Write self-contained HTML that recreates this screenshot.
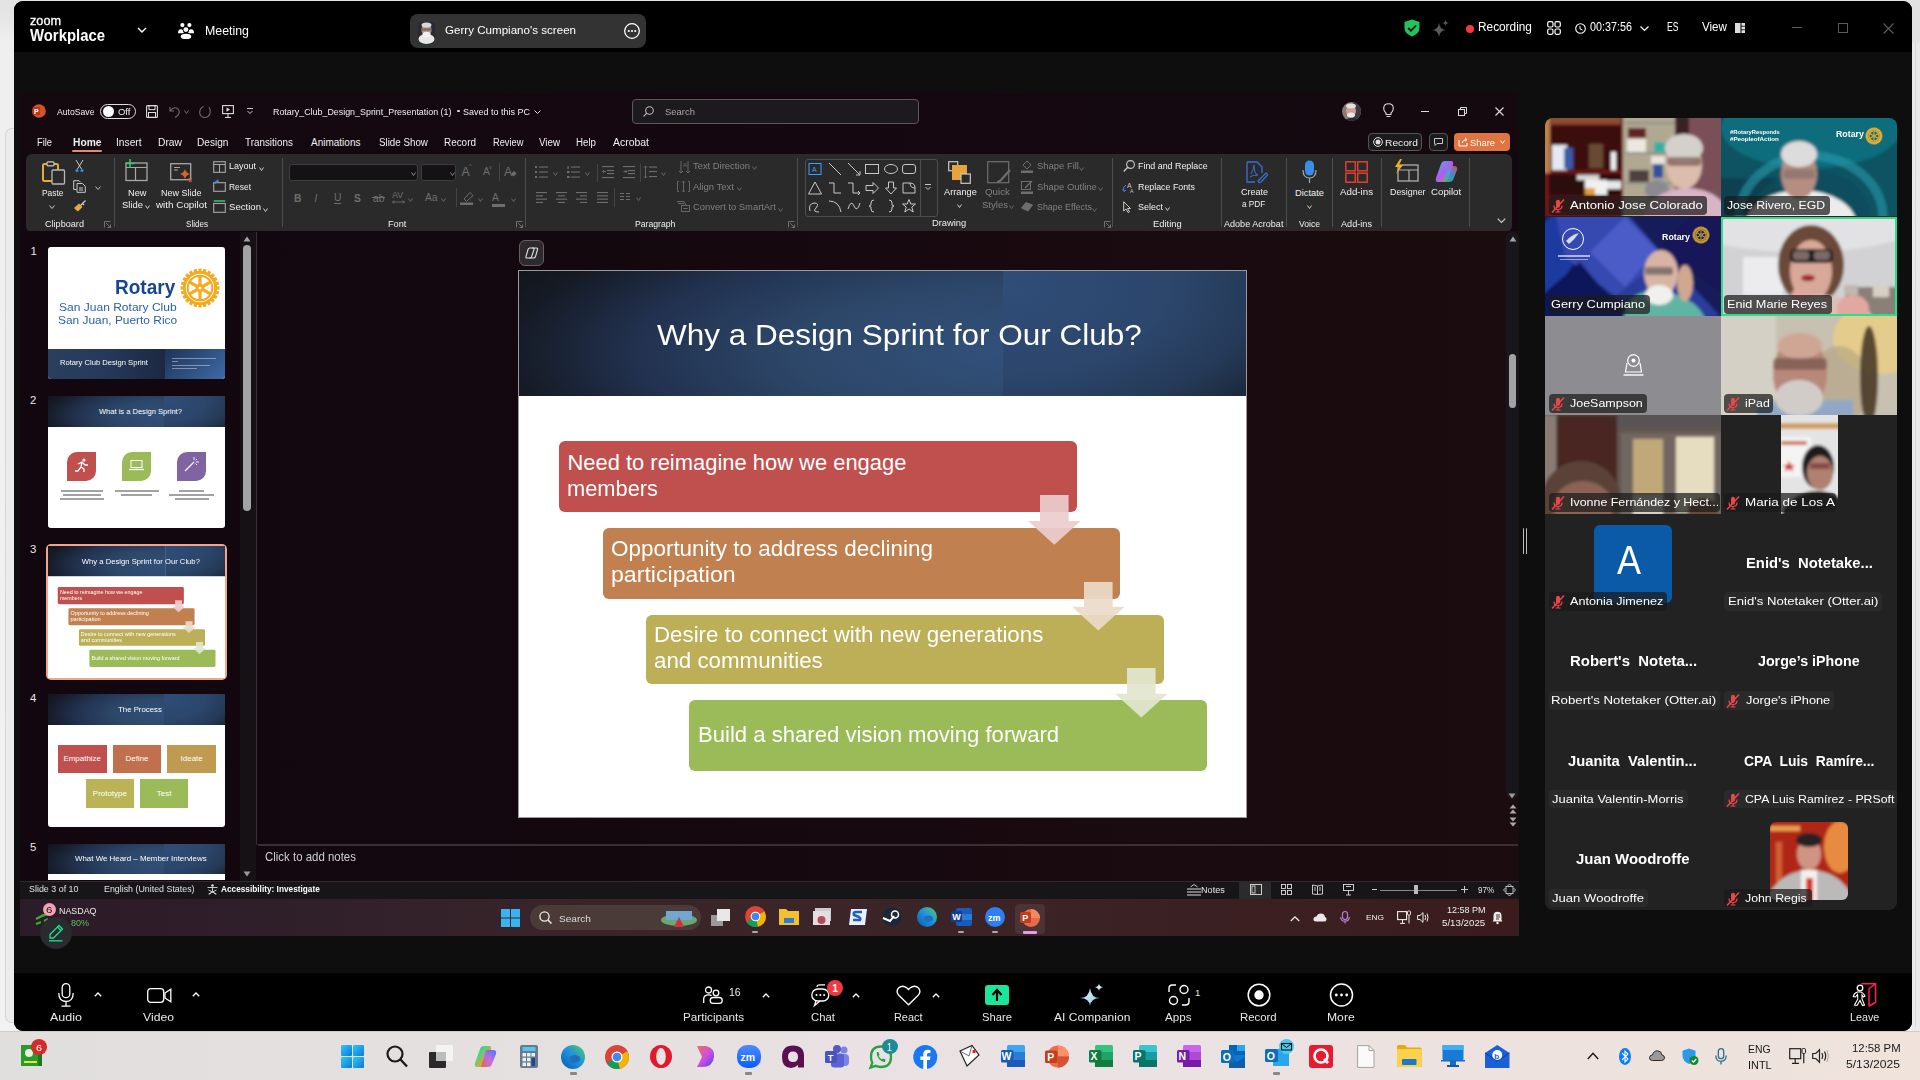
<!DOCTYPE html><html><head><meta charset="utf-8"><style>
html,body{margin:0;padding:0;width:1920px;height:1080px;overflow:hidden;background:#ededed;}
*{box-sizing:border-box;}
.a{position:absolute;}
.t{white-space:pre;line-height:1;font-family:"Liberation Sans",sans-serif;transform-origin:0 0;}
svg{overflow:visible;}
</style></head><body>
<div class="a" style="left:0px;top:0px;width:1920px;height:1080px;background:linear-gradient(180deg,#e4e4e4 0,#e4e4e4 12px,#efefef 42px,#f2f2f2 100%);"></div>
<div class="a" style="left:5px;top:128px;width:12px;height:895px;border-left:1px solid #d6d6d6;border-top:1px solid #d6d6d6;border-bottom:1px solid #d6d6d6;border-radius:7px 0 0 7px;background:#ececec;"></div>
<div class="a" style="left:1912px;top:0px;width:8px;height:1031px;background:linear-gradient(180deg,#e2e2e2 0,#e2e2e2 42px,#e9e9e9 43px,#ebebeb 100%);"></div>
<div class="a" style="left:1915px;top:42px;width:1px;height:985px;background:#d8d8d8;"></div>
<div class="a" style="left:14px;top:1px;width:1898px;height:1030px;background:#0e0e0e;border-radius:9px;"></div>
<div class="a" style="left:14px;top:1px;width:1898px;height:51px;background:#000;border-radius:9px 9px 0 0;"></div>
<div class="a t" style="left:30.00px;top:13.91px;font-size:13.10px;color:#fff;font-weight:400;transform:scaleX(0.9678);-webkit-text-stroke:0.3px #fff;">zoom</div>
<div class="a t" style="left:30.00px;top:27.55px;font-size:15.78px;color:#fff;font-weight:700;transform:scaleX(0.9433);">Workplace</div>
<svg class="a" style="left:137px;top:27px;" width="10" height="6" viewBox="0 0 10 6"><path d="M1 1 L5 5 L9 1" stroke="#fff" stroke-width="1.4" fill="none"/></svg>
<svg class="a" style="left:178px;top:23px;" width="16" height="16" viewBox="0 0 16 16"><circle cx="4.4" cy="2.1" r="2.1" fill="#fff"/><circle cx="11.4" cy="2.1" r="2.1" fill="#fff"/><path d="M0 10.3 Q0 6.3 2.9 6.3 Q5.8 6.3 5.8 10.3Z" fill="#fff"/><path d="M10.2 10.3 Q10.2 6.3 13.1 6.3 Q16 6.3 16 10.3Z" fill="#fff"/><circle cx="7.9" cy="6.6" r="3.2" fill="#000"/><circle cx="7.9" cy="6.6" r="2.4" fill="#fff"/><ellipse cx="8" cy="13.4" rx="6" ry="3.3" fill="#000"/><ellipse cx="8" cy="13.4" rx="5.2" ry="2.6" fill="#fff"/></svg>
<div class="a t" style="left:204.50px;top:24.70px;font-size:12.76px;color:#fff;font-weight:400;transform:scaleX(0.9688);">Meeting</div>
<div class="a" style="left:410px;top:14px;width:236px;height:34px;background:#333;border-radius:8px;"></div>
<svg class="a" style="left:418px;top:22px;" width="17" height="18" viewBox="0 0 17 18"><rect x="0" y="0" width="17" height="18" rx="3" fill="#2a2a34"/><ellipse cx="8.5" cy="17" rx="8" ry="5" fill="#e8e8e8"/><ellipse cx="8.5" cy="8" rx="5" ry="6.5" fill="#c09080"/><ellipse cx="8.5" cy="3" rx="5" ry="2.5" fill="#d8d8d8"/><ellipse cx="8.5" cy="12.5" rx="4" ry="2.8" fill="#f0f0f0"/><rect x="4" y="6.5" width="9" height="2" fill="#555" opacity="0.7"/></svg>
<div class="a t" style="left:444.50px;top:24.71px;font-size:11.80px;color:#fff;font-weight:400;transform:scaleX(0.9823);">Gerry Cumpiano's screen</div>
<svg class="a" style="left:624px;top:23px;" width="16" height="16" viewBox="0 0 16 16"><circle cx="8" cy="8" r="7.3" stroke="#fff" stroke-width="1.3" fill="none"/><circle cx="4.8" cy="8" r="1.1" fill="#fff"/><circle cx="8" cy="8" r="1.1" fill="#fff"/><circle cx="11.2" cy="8" r="1.1" fill="#fff"/></svg>
<svg class="a" style="left:1404px;top:19px;" width="16" height="18" viewBox="0 0 16 18"><path d="M8 0.5 L15.5 3 L15.5 9 Q15.5 14.5 8 17.5 Q0.5 14.5 0.5 9 L0.5 3Z" fill="#21c35b"/><path d="M4.2 9 L7 11.8 L12 6.5" stroke="#111" stroke-width="1.8" fill="none"/></svg>
<svg class="a" style="left:1432px;top:20px;" width="17" height="17" viewBox="0 0 17 17"><path d="M7 3 Q8 10 14 10 Q8 10 7 17 Q6 10 0 10 Q6 10 7 3Z" fill="#5a5a5a"/><path d="M13.5 0 Q14 3 17 3 Q14 3 13.5 6 Q13 3 10 3 Q13 3 13.5 0Z" fill="#5a5a5a"/></svg>
<div class="a" style="left:1466px;top:25px;width:8px;height:8px;background:#f23b3b;border-radius:50%;"></div>
<div class="a t" style="left:1478.00px;top:21.48px;font-size:12.07px;color:#fff;font-weight:400;transform:scaleX(0.9810);">Recording</div>
<svg class="a" style="left:1547px;top:21px;" width="14" height="14" viewBox="0 0 14 14"><rect x="0.7" y="0.7" width="5.3" height="5.3" rx="1.5" stroke="#fff" stroke-width="1.2" fill="none"/><rect x="8" y="0.7" width="5.3" height="5.3" rx="1.5" stroke="#fff" stroke-width="1.2" fill="none"/><rect x="0.7" y="8" width="5.3" height="5.3" rx="1.5" stroke="#fff" stroke-width="1.2" fill="none"/><rect x="8" y="8" width="5.3" height="5.3" rx="1.5" stroke="#fff" stroke-width="1.2" fill="none"/></svg>
<svg class="a" style="left:1575px;top:23px;" width="11" height="11" viewBox="0 0 11 11"><circle cx="5.5" cy="5.5" r="4.8" stroke="#fff" stroke-width="1.1" fill="none"/><path d="M5 3 L5 6 L7.5 7" stroke="#fff" stroke-width="1" fill="none"/></svg>
<div class="a t" style="left:1590.00px;top:21.48px;font-size:12.07px;color:#fff;font-weight:400;transform:scaleX(0.8933);">00:37:56</div>
<svg class="a" style="left:1640px;top:26px;" width="9" height="5" viewBox="0 0 9 5"><path d="M0.5 0.5 L4.5 4.5 L8.5 0.5" stroke="#fff" stroke-width="1.2" fill="none"/></svg>
<div class="a t" style="left:1666.50px;top:21.50px;font-size:11.93px;color:#fff;font-weight:400;transform:scaleX(0.7218);">ES</div>
<div class="a t" style="left:1702.00px;top:21.50px;font-size:11.93px;color:#fff;font-weight:400;transform:scaleX(0.9743);">View</div>
<svg class="a" style="left:1735px;top:23px;" width="10" height="10" viewBox="0 0 10 10"><rect x="0" y="0" width="5.5" height="10" fill="#ddd"/><rect x="6.5" y="0" width="3.5" height="2.8" fill="#ddd"/><rect x="6.5" y="3.6" width="3.5" height="2.8" fill="#ddd"/><rect x="6.5" y="7.2" width="3.5" height="2.8" fill="#ddd"/></svg>
<div class="a" style="left:1792px;top:27px;width:10px;height:1.3px;background:#5a5a5a;"></div>
<div class="a" style="left:1838px;top:23px;width:10px;height:10px;border:1.2px solid #5a5a5a;"></div>
<svg class="a" style="left:1883px;top:23px;" width="11" height="11" viewBox="0 0 11 11"><path d="M0.5 0.5 L10.5 10.5 M10.5 0.5 L0.5 10.5" stroke="#5a5a5a" stroke-width="1.2"/></svg>
<div class="a" style="left:20px;top:93px;width:1498px;height:843px;background:#130710;"></div>
<div class="a" style="left:20px;top:93px;width:1498px;height:61px;background:linear-gradient(90deg,#150910 0%,#14070f 50%,#150910 100%);"></div>
<svg class="a" style="left:32px;top:104px;" width="14" height="14" viewBox="0 0 14 14"><circle cx="7" cy="7" r="6.8" fill="#d9502c"/><rect x="0.5" y="3" width="7.5" height="8" rx="1" fill="#b33a1c"/><text x="2" y="9.8" font-size="7" font-family="Liberation Sans" font-weight="700" fill="#fff">P</text></svg>
<div class="a t" style="left:57.00px;top:107.17px;font-size:9.60px;color:#f0f0f0;font-weight:400;transform:scaleX(0.9009);">AutoSave</div>
<div class="a" style="left:100px;top:103.5px;width:36px;height:15.5px;border:1.3px solid #ddd;border-radius:8px;"></div>
<div class="a" style="left:103px;top:106px;width:11px;height:11px;background:#fff;border-radius:50%;"></div>
<div class="a t" style="left:117.50px;top:107.17px;font-size:9.60px;color:#f0f0f0;font-weight:400;transform:scaleX(0.9862);">Off</div>
<svg class="a" style="left:146px;top:105px;" width="12" height="13" viewBox="0 0 12 13"><rect x="0.6" y="0.6" width="10.8" height="11.8" rx="1" stroke="#ddd" stroke-width="1.1" fill="none"/><rect x="3" y="0.6" width="6" height="4" stroke="#ddd" stroke-width="1" fill="none"/><rect x="2.5" y="7.5" width="7" height="5" stroke="#ddd" stroke-width="1" fill="none"/></svg>
<svg class="a" style="left:169px;top:105px;" width="12" height="13" viewBox="0 0 12 13"><path d="M1 2 L1 6 L5 6 M1.3 5.5 Q4 2 7.5 3 Q11 4.5 10 8.5 Q9 11 6 12.5" stroke="#6e6e6e" stroke-width="1.1" fill="none"/></svg>
<svg class="a" style="left:184px;top:110px;" width="5" height="4" viewBox="0 0 5 4"><path d="M0.5 0.5 L2.5 3.5 L4.5 0.5" stroke="#6e6e6e" stroke-width="1" fill="none"/></svg>
<svg class="a" style="left:199px;top:105px;" width="12" height="13" viewBox="0 0 12 13"><path d="M10 2 Q12 5 11 8.5 Q9.5 12.5 5.5 12.5 Q1 12 0.7 7.5 Q0.8 3 4.5 1.5" stroke="#6e6e6e" stroke-width="1.1" fill="none"/></svg>
<svg class="a" style="left:222px;top:105px;" width="12" height="13" viewBox="0 0 12 13"><rect x="0.6" y="0.6" width="10.8" height="8" stroke="#ddd" stroke-width="1.1" fill="none"/><path d="M6 8.6 L6 12.5 M3 12.5 L9 12.5" stroke="#ddd" stroke-width="1.1"/><path d="M4.5 2.5 L8 4.6 L4.5 6.7Z" fill="#ddd"/></svg>
<svg class="a" style="left:247px;top:108px;" width="6" height="7" viewBox="0 0 6 7"><path d="M0 0.5 L6 0.5 M0.5 3 L3 5.5 L5.5 3" stroke="#ccc" stroke-width="1" fill="none"/></svg>
<div class="a t" style="left:273.00px;top:107.34px;font-size:9.88px;color:#f0f0f0;font-weight:400;transform:scaleX(0.9007);">Rotary_Club_Design_Sprint_Presentation (1)</div>
<div class="a" style="left:457px;top:109.5px;width:2.6px;height:2.6px;background:#ddd;border-radius:50%;"></div>
<div class="a t" style="left:463.00px;top:107.34px;font-size:9.88px;color:#f0f0f0;font-weight:400;transform:scaleX(0.9106);">Saved to this PC</div>
<svg class="a" style="left:534px;top:110px;" width="7" height="4" viewBox="0 0 7 4"><path d="M0.5 0.5 L3.5 3.5 L6.5 0.5" stroke="#ddd" stroke-width="1" fill="none"/></svg>
<div class="a" style="left:632px;top:99px;width:287px;height:25px;background:#1c1a1c;border:1px solid #5a5a5a;border-radius:4px;"></div>
<svg class="a" style="left:643px;top:106px;" width="11" height="11" viewBox="0 0 11 11"><circle cx="6.5" cy="4.5" r="3.8" stroke="#bbb" stroke-width="1.1" fill="none"/><path d="M3.8 7.2 L0.6 10.4" stroke="#bbb" stroke-width="1.2"/></svg>
<div class="a t" style="left:664.50px;top:107.44px;font-size:9.88px;color:#a8a8a8;font-weight:400;transform:scaleX(0.9582);">Search</div>
<svg class="a" style="left:1342px;top:102px;" width="19" height="19" viewBox="0 0 19 19"><defs><clipPath id="avc"><circle cx="9.5" cy="9.5" r="9.5"/></clipPath></defs><g clip-path="url(#avc)"><rect width="19" height="19" fill="#8a7a74"/><rect x="11" y="0" width="8" height="19" fill="#3a3a40"/><ellipse cx="9" cy="9" rx="5" ry="6" fill="#d0a090"/><ellipse cx="9" cy="4" rx="5" ry="2.5" fill="#e0e0e0"/><ellipse cx="9" cy="13" rx="4" ry="2.5" fill="#e8e8e8"/><ellipse cx="10" cy="20" rx="8" ry="4" fill="#2a2a30"/></g></svg>
<svg class="a" style="left:1383px;top:103px;" width="11" height="15" viewBox="0 0 11 15"><path d="M5.5 0.8 Q10.3 0.8 10.3 5.5 Q10.3 8 8 10 L8 11.5 L3 11.5 L3 10 Q0.7 8 0.7 5.5 Q0.7 0.8 5.5 0.8Z M3.5 13.5 L7.5 13.5" stroke="#ddd" stroke-width="1.1" fill="none"/></svg>
<div class="a" style="left:1421px;top:111px;width:8px;height:1.2px;background:#ddd;"></div>
<svg class="a" style="left:1458px;top:107px;" width="9" height="9" viewBox="0 0 9 9"><rect x="0.5" y="2.5" width="6" height="6" stroke="#ddd" stroke-width="1" fill="none"/><path d="M2.5 2.5 L2.5 0.5 L8.5 0.5 L8.5 6.5 L6.5 6.5" stroke="#ddd" stroke-width="1" fill="none"/></svg>
<svg class="a" style="left:1495px;top:107px;" width="9" height="9" viewBox="0 0 9 9"><path d="M0.5 0.5 L8.5 8.5 M8.5 0.5 L0.5 8.5" stroke="#ddd" stroke-width="1.1"/></svg>
<div class="a t" style="left:37.00px;top:137.72px;font-size:10.01px;color:#f0f0f0;font-weight:400;transform:scaleX(0.9304);">File</div>
<div class="a t" style="left:72.50px;top:137.72px;font-size:10.01px;color:#f0f0f0;font-weight:700;transform:scaleX(1.0238);">Home</div>
<div class="a t" style="left:116.40px;top:137.72px;font-size:10.01px;color:#f0f0f0;font-weight:400;transform:scaleX(1.0226);">Insert</div>
<div class="a t" style="left:158.00px;top:137.72px;font-size:10.01px;color:#f0f0f0;font-weight:400;transform:scaleX(1.0264);">Draw</div>
<div class="a t" style="left:197.00px;top:137.72px;font-size:10.01px;color:#f0f0f0;font-weight:400;transform:scaleX(1.0099);">Design</div>
<div class="a t" style="left:245.00px;top:137.72px;font-size:10.01px;color:#f0f0f0;font-weight:400;transform:scaleX(0.9873);">Transitions</div>
<div class="a t" style="left:311.00px;top:137.72px;font-size:10.01px;color:#f0f0f0;font-weight:400;">Animations</div>
<div class="a t" style="left:379.00px;top:137.72px;font-size:10.01px;color:#f0f0f0;font-weight:400;transform:scaleX(0.9777);">Slide Show</div>
<div class="a t" style="left:444.00px;top:137.72px;font-size:10.01px;color:#f0f0f0;font-weight:400;transform:scaleX(0.9909);">Record</div>
<div class="a t" style="left:492.60px;top:137.72px;font-size:10.01px;color:#f0f0f0;font-weight:400;transform:scaleX(0.9256);">Review</div>
<div class="a t" style="left:539.00px;top:137.72px;font-size:10.01px;color:#f0f0f0;font-weight:400;transform:scaleX(0.9754);">View</div>
<div class="a t" style="left:576.00px;top:137.72px;font-size:10.01px;color:#f0f0f0;font-weight:400;transform:scaleX(0.9719);">Help</div>
<div class="a t" style="left:613.00px;top:137.72px;font-size:10.01px;color:#f0f0f0;font-weight:400;transform:scaleX(1.0436);">Acrobat</div>
<div class="a" style="left:72px;top:150px;width:30px;height:2px;background:#e38b6e;border-radius:1px;"></div>
<div class="a" style="left:1368px;top:133px;width:54px;height:18px;border:1px solid #555;border-radius:4px;background:#1b1b1b;"></div>
<svg class="a" style="left:1373px;top:137px;" width="10" height="10" viewBox="0 0 10 10"><circle cx="5" cy="5" r="4.4" stroke="#ddd" stroke-width="1" fill="none"/><circle cx="5" cy="5" r="2.5" fill="#ddd"/></svg>
<div class="a t" style="left:1385.00px;top:137.87px;font-size:9.60px;color:#f0f0f0;font-weight:400;transform:scaleX(1.0656);">Record</div>
<div class="a" style="left:1429px;top:133px;width:19px;height:18px;border:1px solid #555;border-radius:4px;background:#1b1b1b;"></div>
<svg class="a" style="left:1434px;top:138px;" width="9" height="8" viewBox="0 0 9 8"><path d="M0.5 0.5 L8.5 0.5 L8.5 5.5 L3 5.5 L1 7.5 L1 5.5 L0.5 5.5Z" stroke="#ddd" stroke-width="0.9" fill="none"/></svg>
<div class="a" style="left:1454px;top:133px;width:56px;height:18px;background:#df7540;border-radius:4px;"></div>
<svg class="a" style="left:1458px;top:137px;" width="10" height="10" viewBox="0 0 10 10"><path d="M1 3 L1 9 L9 9 L9 6 M4 6 Q5 2.5 9 2.5 M7 0.8 L9 2.5 L7 4.3" stroke="#fff" stroke-width="1" fill="none"/></svg>
<div class="a t" style="left:1470.00px;top:137.87px;font-size:9.60px;color:#fff;font-weight:400;transform:scaleX(0.9751);">Share</div>
<svg class="a" style="left:1500px;top:140px;" width="5" height="4" viewBox="0 0 5 4"><path d="M0.5 0.5 L2.5 3.5 L4.5 0.5" stroke="#fff" stroke-width="1" fill="none"/></svg>
<div class="a" style="left:26px;top:154px;width:1486px;height:77.5px;background:#2b2a2b;border-radius:6px;"></div>
<svg class="a" style="left:42px;top:161px;" width="24" height="24" viewBox="0 0 24 24"><rect x="1" y="3" width="15" height="17" rx="1.5" stroke="#e8a838" stroke-width="2" fill="none"/><rect x="5" y="0.8" width="7" height="4" rx="1" stroke="#c8c8c8" stroke-width="1.2" fill="#2b2a2b"/><rect x="10" y="9" width="12.5" height="14" rx="1" stroke="#b8b8b8" stroke-width="1.3" fill="#2b2a2b"/></svg>
<div class="a t" style="left:41.60px;top:189.10px;font-size:9.33px;color:#f0f0f0;font-weight:400;transform:scaleX(0.9021);">Paste</div>
<svg class="a" style="left:49px;top:205px;" width="6" height="4" viewBox="0 0 6 4"><path d="M0.5 0.5 L3.0 3.5 L5.5 0.5" stroke="#ccc" stroke-width="1" fill="none"/></svg>
<svg class="a" style="left:75px;top:160px;" width="9" height="13" viewBox="0 0 9 13"><path d="M1 0 L6.5 9 M8 0 L2.5 9" stroke="#c8c8c8" stroke-width="1"/><circle cx="2" cy="10.5" r="1.6" fill="#3b8be0"/><circle cx="7" cy="10.5" r="1.6" fill="#3b8be0"/></svg>
<svg class="a" style="left:73px;top:180px;" width="13" height="13" viewBox="0 0 13 13"><path d="M3.5 9.5 L0.7 9.5 L0.7 0.7 L6 0.7 L7.5 2.2" stroke="#c8c8c8" stroke-width="1" fill="none"/><path d="M4 3.5 L9.5 3.5 L12.3 6.3 L12.3 12.3 L4 12.3Z M6 8 L10 8 M6 10 L10 10" stroke="#c8c8c8" stroke-width="1" fill="none"/></svg>
<svg class="a" style="left:95px;top:186px;" width="6" height="4" viewBox="0 0 6 4"><path d="M0.5 0.5 L3.0 3.5 L5.5 0.5" stroke="#bbb" stroke-width="1" fill="none"/></svg>
<svg class="a" style="left:73px;top:200px;" width="13" height="12" viewBox="0 0 13 12"><path d="M12.5 0.5 L7 6 M9 3 L11 5" stroke="#c8c8c8" stroke-width="1.3"/><path d="M1 8 L6 3.5 L9.5 7 L5 11.5 Q3 10 1 8Z" fill="#e8a838"/></svg>
<div class="a t" style="left:45.00px;top:219.57px;font-size:8.78px;color:#f0f0f0;font-weight:400;transform:scaleX(1.0379);">Clipboard</div>
<svg class="a" style="left:104px;top:221px;" width="7" height="7" viewBox="0 0 7 7"><path d="M0.5 6.5 L0.5 0.5 L6.5 0.5 M2 2 L6.5 6.5 M3.5 6.5 L6.5 6.5 L6.5 3.5" stroke="#777" stroke-width="0.9" fill="none"/></svg>
<div class="a" style="left:113.7px;top:158px;width:1px;height:69px;background:#4e4e4e;"></div>
<svg class="a" style="left:124px;top:159px;" width="24" height="23" viewBox="0 0 24 23"><rect x="2" y="4" width="21" height="17.5" stroke="#a8a8a8" stroke-width="1.3" fill="none"/><path d="M2 8.5 L23 8.5 M11.5 8.5 L11.5 21.5" stroke="#a8a8a8" stroke-width="1.2"/><path d="M6 0 L6 9 M1.5 4.5 L10.5 4.5" stroke="#39c86a" stroke-width="1.6"/></svg>
<div class="a t" style="left:127.60px;top:189.10px;font-size:9.33px;color:#f0f0f0;font-weight:400;transform:scaleX(0.9892);">New</div>
<div class="a t" style="left:122.00px;top:200.90px;font-size:9.33px;color:#f0f0f0;font-weight:400;transform:scaleX(1.0118);">Slide</div>
<svg class="a" style="left:145px;top:205px;" width="5" height="4" viewBox="0 0 5 4"><path d="M0.5 0.5 L2.5 3.5 L4.5 0.5" stroke="#ccc" stroke-width="1" fill="none"/></svg>
<svg class="a" style="left:170px;top:163px;" width="23" height="21" viewBox="0 0 23 21"><rect x="0.7" y="0.7" width="20" height="16" stroke="#a8a8a8" stroke-width="1.3" fill="none"/><path d="M4 4.5 L10 4.5 M4 7 L8 7" stroke="#a8a8a8" stroke-width="1"/><path d="M15 6 Q16 10 20 11 Q16 12 15 16 Q14 12 10 11 Q14 10 15 6Z" fill="#e06030"/><path d="M19 15 L21.5 19 M21.5 15 L19 19" stroke="#e06030" stroke-width="1.1"/></svg>
<div class="a t" style="left:161.40px;top:189.10px;font-size:9.33px;color:#f0f0f0;font-weight:400;transform:scaleX(0.9672);">New Slide</div>
<div class="a t" style="left:155.75px;top:200.90px;font-size:9.33px;color:#f0f0f0;font-weight:400;transform:scaleX(1.0565);">with Copilot</div>
<svg class="a" style="left:213px;top:161px;" width="13" height="12" viewBox="0 0 13 12"><rect x="0.7" y="0.7" width="11.6" height="10.6" stroke="#a8a8a8" stroke-width="1.1" fill="none"/><path d="M0.7 3.5 L12.3 3.5 M6.5 3.5 L6.5 11.3" stroke="#a8a8a8" stroke-width="1"/></svg>
<div class="a t" style="left:229.00px;top:162.10px;font-size:9.33px;color:#f0f0f0;font-weight:400;transform:scaleX(0.9632);">Layout</div>
<svg class="a" style="left:259px;top:167px;" width="5" height="4" viewBox="0 0 5 4"><path d="M0.5 0.5 L2.5 3.5 L4.5 0.5" stroke="#ccc" stroke-width="1" fill="none"/></svg>
<svg class="a" style="left:213px;top:180px;" width="13" height="12" viewBox="0 0 13 12"><rect x="0.7" y="2.7" width="11.6" height="8.6" stroke="#a8a8a8" stroke-width="1.1" fill="none"/><path d="M2 4 Q2 0.5 5.5 1 L4 0 M5.5 1 L4 2.5" stroke="#3b8be0" stroke-width="1.2" fill="none"/></svg>
<div class="a t" style="left:229.00px;top:182.70px;font-size:9.33px;color:#f0f0f0;font-weight:400;transform:scaleX(0.9037);">Reset</div>
<svg class="a" style="left:213px;top:200px;" width="13" height="13" viewBox="0 0 13 13"><path d="M0.7 1 L12.3 1" stroke="#39c86a" stroke-width="1.5"/><rect x="0.7" y="3.5" width="11.6" height="8.8" stroke="#a8a8a8" stroke-width="1.1" fill="none"/></svg>
<div class="a t" style="left:229.00px;top:203.10px;font-size:9.33px;color:#f0f0f0;font-weight:400;transform:scaleX(1.0287);">Section</div>
<svg class="a" style="left:263px;top:208px;" width="5" height="4" viewBox="0 0 5 4"><path d="M0.5 0.5 L2.5 3.5 L4.5 0.5" stroke="#ccc" stroke-width="1" fill="none"/></svg>
<div class="a t" style="left:185.80px;top:219.57px;font-size:8.78px;color:#f0f0f0;font-weight:400;transform:scaleX(0.9280);">Slides</div>
<div class="a" style="left:281.5px;top:158px;width:1px;height:69px;background:#4e4e4e;"></div>
<div class="a" style="left:289px;top:163.5px;width:129px;height:17.5px;background:#151215;border:1px solid #3e3c3e;border-radius:3px;"></div>
<svg class="a" style="left:411px;top:172px;" width="5" height="4" viewBox="0 0 5 4"><path d="M0.5 0.5 L2.5 3.5 L4.5 0.5" stroke="#888" stroke-width="1" fill="none"/></svg>
<div class="a" style="left:421px;top:163.5px;width:35px;height:17.5px;background:#151215;border:1px solid #3e3c3e;border-radius:3px;"></div>
<svg class="a" style="left:450px;top:172px;" width="5" height="4" viewBox="0 0 5 4"><path d="M0.5 0.5 L2.5 3.5 L4.5 0.5" stroke="#888" stroke-width="1" fill="none"/></svg>
<div class="a t" style="left:461.50px;top:165.55px;font-size:12.35px;color:#6e6e6e;font-weight:400;">A</div>
<div class="a t" style="left:483.00px;top:167.29px;font-size:10.29px;color:#6e6e6e;font-weight:400;">A</div>
<div class="a t" style="left:469.00px;top:164.36px;font-size:5.49px;color:#6e6e6e;font-weight:400;">^</div>
<div class="a t" style="left:489.00px;top:165.36px;font-size:5.49px;color:#6e6e6e;font-weight:400;">v</div>
<div class="a" style="left:499px;top:163px;width:1px;height:18px;background:#444;"></div>
<div class="a t" style="left:504.00px;top:165.55px;font-size:12.35px;color:#6e6e6e;font-weight:400;">A</div>
<svg class="a" style="left:510px;top:170px;" width="7" height="7" viewBox="0 0 7 7"><path d="M1 4 L4 1 L6.5 3.5 L3.5 6.5Z" fill="#6e6e6e"/></svg>
<div class="a t" style="left:294.00px;top:193.79px;font-size:10.29px;color:#6e6e6e;font-weight:700;">B</div>
<div class="a t" style="left:314.50px;top:193.79px;font-size:10.29px;color:#6e6e6e;font-weight:400;font-style:italic;">I</div>
<div class="a t" style="left:334.00px;top:192.79px;font-size:10.29px;color:#6e6e6e;font-weight:400;">U</div>
<div class="a" style="left:334px;top:203px;width:7px;height:1px;background:#6e6e6e;"></div>
<div class="a t" style="left:354.00px;top:193.79px;font-size:10.29px;color:#6e6e6e;font-weight:700;">S</div>
<div class="a t" style="left:373.00px;top:193.79px;font-size:10.29px;color:#6e6e6e;font-weight:400;">ab</div>
<div class="a" style="left:372px;top:197px;width:13px;height:1px;background:#6e6e6e;"></div>
<div class="a t" style="left:392.00px;top:191.45px;font-size:8.92px;color:#6e6e6e;font-weight:400;">AV</div>
<svg class="a" style="left:392px;top:200px;" width="13" height="4" viewBox="0 0 13 4"><path d="M0.5 2 L12.5 2 M2 0.5 L0.5 2 L2 3.5 M11 0.5 L12.5 2 L11 3.5" stroke="#6e6e6e" stroke-width="0.9" fill="none"/></svg>
<svg class="a" style="left:408px;top:198px;" width="5" height="4" viewBox="0 0 5 4"><path d="M0.5 0.5 L2.5 3.5 L4.5 0.5" stroke="#666" stroke-width="1" fill="none"/></svg>
<div class="a t" style="left:425.00px;top:193.29px;font-size:10.29px;color:#6e6e6e;font-weight:400;">Aa</div>
<svg class="a" style="left:441px;top:198px;" width="5" height="4" viewBox="0 0 5 4"><path d="M0.5 0.5 L2.5 3.5 L4.5 0.5" stroke="#666" stroke-width="1" fill="none"/></svg>
<div class="a" style="left:455.5px;top:188px;width:1px;height:19px;background:#444;"></div>
<svg class="a" style="left:460px;top:191px;" width="14" height="14" viewBox="0 0 14 14"><path d="M4 8 L10 1.5 L13 4.5 L6.5 10.5Z" stroke="#6e6e6e" stroke-width="1" fill="none"/><rect x="0" y="11.5" width="13" height="2.5" fill="#6e6e6e"/></svg>
<svg class="a" style="left:478px;top:198px;" width="5" height="4" viewBox="0 0 5 4"><path d="M0.5 0.5 L2.5 3.5 L4.5 0.5" stroke="#666" stroke-width="1" fill="none"/></svg>
<div class="a t" style="left:492.00px;top:193.29px;font-size:10.29px;color:#6e6e6e;font-weight:400;">A</div>
<div class="a" style="left:492px;top:204px;width:13px;height:2.5px;background:#6e6e6e;"></div>
<svg class="a" style="left:511px;top:198px;" width="5" height="4" viewBox="0 0 5 4"><path d="M0.5 0.5 L2.5 3.5 L4.5 0.5" stroke="#666" stroke-width="1" fill="none"/></svg>
<div class="a t" style="left:387.60px;top:219.57px;font-size:8.78px;color:#f0f0f0;font-weight:400;transform:scaleX(1.0479);">Font</div>
<svg class="a" style="left:516px;top:221px;" width="7" height="7" viewBox="0 0 7 7"><path d="M0.5 6.5 L0.5 0.5 L6.5 0.5 M2 2 L6.5 6.5 M3.5 6.5 L6.5 6.5 L6.5 3.5" stroke="#777" stroke-width="0.9" fill="none"/></svg>
<div class="a" style="left:525.4px;top:158px;width:1px;height:69px;background:#4e4e4e;"></div>
<svg class="a" style="left:535px;top:166px;" width="13" height="12" viewBox="0 0 13 12"><rect x="0" y="0" width="2" height="2" fill="#6e6e6e"/><rect x="0" y="5" width="2" height="2" fill="#6e6e6e"/><rect x="0" y="10" width="2" height="2" fill="#6e6e6e"/><rect x="4" y="0.5" width="9" height="1.1" fill="#6e6e6e"/><rect x="4" y="5.5" width="9" height="1.1" fill="#6e6e6e"/><rect x="4" y="10.5" width="9" height="1.1" fill="#6e6e6e"/></svg>
<svg class="a" style="left:553px;top:172px;" width="5" height="4" viewBox="0 0 5 4"><path d="M0.5 0.5 L2.5 3.5 L4.5 0.5" stroke="#666" stroke-width="1" fill="none"/></svg>
<svg class="a" style="left:567px;top:166px;" width="13" height="12" viewBox="0 0 13 12"><rect x="4" y="0.5" width="9" height="1.1" fill="#6e6e6e"/><rect x="4" y="5.5" width="9" height="1.1" fill="#6e6e6e"/><rect x="4" y="10.5" width="9" height="1.1" fill="#6e6e6e"/><rect x="0.5" y="0" width="1.2" height="3" fill="#6e6e6e"/><rect x="0" y="5" width="2.5" height="2" fill="#6e6e6e"/><rect x="0" y="10" width="2.5" height="2" fill="#6e6e6e"/></svg>
<svg class="a" style="left:585px;top:172px;" width="5" height="4" viewBox="0 0 5 4"><path d="M0.5 0.5 L2.5 3.5 L4.5 0.5" stroke="#666" stroke-width="1" fill="none"/></svg>
<div class="a" style="left:596.5px;top:164px;width:1px;height:18px;background:#444;"></div>
<svg class="a" style="left:602px;top:166px;" width="12" height="12" viewBox="0 0 12 12"><rect x="0" y="0" width="12" height="1.1" fill="#6e6e6e"/><rect x="5" y="4" width="7" height="1.1" fill="#6e6e6e"/><rect x="5" y="7" width="7" height="1.1" fill="#6e6e6e"/><rect x="0" y="11" width="12" height="1.1" fill="#6e6e6e"/><path d="M4 5.5 L0.5 5.5 M2 4 L0.5 5.5 L2 7" stroke="#6e6e6e" stroke-width="0.9" fill="none"/></svg>
<svg class="a" style="left:623px;top:166px;" width="12" height="12" viewBox="0 0 12 12"><rect x="0" y="0" width="12" height="1.1" fill="#6e6e6e"/><rect x="5" y="4" width="7" height="1.1" fill="#6e6e6e"/><rect x="5" y="7" width="7" height="1.1" fill="#6e6e6e"/><rect x="0" y="11" width="12" height="1.1" fill="#6e6e6e"/><path d="M0.5 5.5 L4 5.5 M2.5 4 L4 5.5 L2.5 7" stroke="#6e6e6e" stroke-width="0.9" fill="none"/></svg>
<div class="a" style="left:639.5px;top:164px;width:1px;height:18px;background:#444;"></div>
<svg class="a" style="left:644px;top:166px;" width="13" height="12" viewBox="0 0 13 12"><path d="M1.5 0 L1.5 12 M0 1.5 L1.5 0 L3 1.5 M0 10.5 L1.5 12 L3 10.5" stroke="#6e6e6e" stroke-width="0.9" fill="none"/><rect x="5" y="0.5" width="8" height="1.1" fill="#6e6e6e"/><rect x="5" y="5" width="8" height="1.1" fill="#6e6e6e"/><rect x="5" y="10" width="8" height="1.1" fill="#6e6e6e"/></svg>
<svg class="a" style="left:661px;top:172px;" width="5" height="4" viewBox="0 0 5 4"><path d="M0.5 0.5 L2.5 3.5 L4.5 0.5" stroke="#666" stroke-width="1" fill="none"/></svg>
<svg class="a" style="left:536px;top:192px;" width="11" height="11" viewBox="0 0 11 11"><rect x="0" y="0.0" width="11" height="1.1" fill="#6e6e6e"/><rect x="0" y="3.3" width="7" height="1.1" fill="#6e6e6e"/><rect x="0" y="6.6" width="11" height="1.1" fill="#6e6e6e"/><rect x="0" y="9.899999999999999" width="7" height="1.1" fill="#6e6e6e"/></svg>
<svg class="a" style="left:556px;top:192px;" width="11" height="11" viewBox="0 0 11 11"><rect x="0.0" y="0.0" width="11" height="1.1" fill="#6e6e6e"/><rect x="2.0" y="3.3" width="7" height="1.1" fill="#6e6e6e"/><rect x="0.0" y="6.6" width="11" height="1.1" fill="#6e6e6e"/><rect x="2.0" y="9.899999999999999" width="7" height="1.1" fill="#6e6e6e"/></svg>
<svg class="a" style="left:576px;top:192px;" width="11" height="11" viewBox="0 0 11 11"><rect x="0" y="0.0" width="11" height="1.1" fill="#6e6e6e"/><rect x="4" y="3.3" width="7" height="1.1" fill="#6e6e6e"/><rect x="0" y="6.6" width="11" height="1.1" fill="#6e6e6e"/><rect x="4" y="9.899999999999999" width="7" height="1.1" fill="#6e6e6e"/></svg>
<svg class="a" style="left:597px;top:192px;" width="11" height="11" viewBox="0 0 11 11"><rect x="0" y="0.0" width="11" height="1.1" fill="#6e6e6e"/><rect x="0" y="3.3" width="11" height="1.1" fill="#6e6e6e"/><rect x="0" y="6.6" width="11" height="1.1" fill="#6e6e6e"/><rect x="0" y="9.899999999999999" width="11" height="1.1" fill="#6e6e6e"/></svg>
<div class="a" style="left:613.5px;top:188px;width:1px;height:19px;background:#444;"></div>
<svg class="a" style="left:620px;top:193px;" width="10" height="7" viewBox="0 0 10 7"><rect x="0" y="0" width="4" height="1" fill="#6e6e6e"/><rect x="6" y="0" width="4" height="1" fill="#6e6e6e"/><rect x="0" y="3" width="4" height="1" fill="#6e6e6e"/><rect x="6" y="3" width="4" height="1" fill="#6e6e6e"/><rect x="0" y="6" width="4" height="1" fill="#6e6e6e"/><rect x="6" y="6" width="4" height="1" fill="#6e6e6e"/></svg>
<svg class="a" style="left:636px;top:197px;" width="5" height="4" viewBox="0 0 5 4"><path d="M0.5 0.5 L2.5 3.5 L4.5 0.5" stroke="#666" stroke-width="1" fill="none"/></svg>
<svg class="a" style="left:679px;top:161px;" width="11" height="13" viewBox="0 0 11 13"><path d="M2 0 L2 12 M0 10 L2 12 L4 10 M9 0 L9 12 M7 10 L9 12 L11 10" stroke="#6e6e6e" stroke-width="0.9" fill="none"/><text x="4" y="6" font-size="6" fill="#6e6e6e" font-family="Liberation Sans">A</text></svg>
<div class="a t" style="left:693.40px;top:161.97px;font-size:9.19px;color:#808080;font-weight:400;transform:scaleX(1.0234);">Text Direction</div>
<svg class="a" style="left:752px;top:166px;" width="5" height="4" viewBox="0 0 5 4"><path d="M0.5 0.5 L2.5 3.5 L4.5 0.5" stroke="#666" stroke-width="1" fill="none"/></svg>
<svg class="a" style="left:677px;top:181px;" width="13" height="11" viewBox="0 0 13 11"><path d="M2 0.5 L0.5 0.5 L0.5 10.5 L2 10.5 M11 0.5 L12.5 0.5 L12.5 10.5 L11 10.5 M6.5 0 L6.5 11 M5 1.5 L6.5 0 L8 1.5 M5 9.5 L6.5 11 L8 9.5" stroke="#6e6e6e" stroke-width="0.9" fill="none"/></svg>
<div class="a t" style="left:693.40px;top:182.72px;font-size:9.19px;color:#808080;font-weight:400;transform:scaleX(1.0326);">Align Text</div>
<svg class="a" style="left:737px;top:187px;" width="5" height="4" viewBox="0 0 5 4"><path d="M0.5 0.5 L2.5 3.5 L4.5 0.5" stroke="#666" stroke-width="1" fill="none"/></svg>
<svg class="a" style="left:677px;top:201px;" width="13" height="11" viewBox="0 0 13 11"><path d="M0 0.5 L7 0.5 L9 4 M1 2.5 L7 2.5" stroke="#6e6e6e" stroke-width="0.9" fill="none"/><rect x="4.5" y="4.5" width="8" height="6" stroke="#6e6e6e" stroke-width="0.9" fill="none"/><rect x="6.5" y="7" width="4" height="1" fill="#6e6e6e"/></svg>
<div class="a t" style="left:693.40px;top:203.22px;font-size:9.19px;color:#808080;font-weight:400;transform:scaleX(1.0222);">Convert to SmartArt</div>
<svg class="a" style="left:778px;top:208px;" width="5" height="4" viewBox="0 0 5 4"><path d="M0.5 0.5 L2.5 3.5 L4.5 0.5" stroke="#666" stroke-width="1" fill="none"/></svg>
<div class="a t" style="left:634.70px;top:219.57px;font-size:8.78px;color:#f0f0f0;font-weight:400;transform:scaleX(0.9878);">Paragraph</div>
<svg class="a" style="left:788px;top:221px;" width="7" height="7" viewBox="0 0 7 7"><path d="M0.5 6.5 L0.5 0.5 L6.5 0.5 M2 2 L6.5 6.5 M3.5 6.5 L6.5 6.5 L6.5 3.5" stroke="#777" stroke-width="0.9" fill="none"/></svg>
<div class="a" style="left:797.4px;top:158px;width:1px;height:69px;background:#4e4e4e;"></div>
<div class="a" style="left:805px;top:158.5px;width:133px;height:58px;border:1px solid #4e4e4e;border-radius:3px;"></div>
<div class="a" style="left:919.5px;top:159px;width:1px;height:57px;background:#4e4e4e;"></div>
<svg class="a" style="left:807.3px;top:160.5px" width="16" height="16" viewBox="-8 -8 16 16"><rect x="-6" y="-5.5" width="12" height="11" stroke="#3aa0ff" stroke-width="1" fill="none"/><text x="-3" y="3" font-size="7" fill="#3aa0ff" font-family="Liberation Sans">A</text></svg>
<svg class="a" style="left:826.5px;top:160.5px" width="16" height="16" viewBox="-8 -8 16 16"><path d="M-6 -6 L6 6" stroke="#c8c8c8" stroke-width="1"/></svg>
<svg class="a" style="left:845.5px;top:160.5px" width="16" height="16" viewBox="-8 -8 16 16"><path d="M-6 -6 L6 6 M6 2 L6 6 L2 6" stroke="#c8c8c8" stroke-width="1" fill="none"/></svg>
<svg class="a" style="left:864.0px;top:160.5px" width="16" height="16" viewBox="-8 -8 16 16"><rect x="-6.5" y="-4.5" width="13" height="9" stroke="#c8c8c8" stroke-width="1" fill="none"/></svg>
<svg class="a" style="left:882.5px;top:160.5px" width="16" height="16" viewBox="-8 -8 16 16"><ellipse cx="0" cy="0" rx="6.5" ry="4.5" stroke="#c8c8c8" stroke-width="1" fill="none"/></svg>
<svg class="a" style="left:901.4px;top:160.5px" width="16" height="16" viewBox="-8 -8 16 16"><rect x="-6.5" y="-4.5" width="13" height="9" rx="2.5" stroke="#c8c8c8" stroke-width="1" fill="none"/></svg>
<svg class="a" style="left:807.3px;top:179.6px" width="16" height="16" viewBox="-8 -8 16 16"><path d="M0 -6 L6.5 6 L-6.5 6Z" stroke="#c8c8c8" stroke-width="1" fill="none"/></svg>
<svg class="a" style="left:826.5px;top:179.6px" width="16" height="16" viewBox="-8 -8 16 16"><path d="M-6 -5 L-1 -5 L-1 5 L6 5" stroke="#c8c8c8" stroke-width="1" fill="none"/></svg>
<svg class="a" style="left:845.5px;top:179.6px" width="16" height="16" viewBox="-8 -8 16 16"><path d="M-6 -5 L-1 -5 L-1 5 L6 5 M4 3 L6 5 L4 7" stroke="#c8c8c8" stroke-width="1" fill="none"/></svg>
<svg class="a" style="left:864.0px;top:179.6px" width="16" height="16" viewBox="-8 -8 16 16"><path d="M-6 -2.5 L1 -2.5 L1 -5.5 L6.5 0 L1 5.5 L1 2.5 L-6 2.5Z" stroke="#c8c8c8" stroke-width="1" fill="none"/></svg>
<svg class="a" style="left:882.5px;top:179.6px" width="16" height="16" viewBox="-8 -8 16 16"><path d="M-2.5 -6 L2.5 -6 L2.5 0 L5.5 0 L0 6 L-5.5 0 L-2.5 0Z" stroke="#c8c8c8" stroke-width="1" fill="none"/></svg>
<svg class="a" style="left:901.4px;top:179.6px" width="16" height="16" viewBox="-8 -8 16 16"><path d="M-6 -5 L1 -5 Q6 -5 6 0 L6 5 L-6 5Z M1 -5 Q1 0 6 0" stroke="#c8c8c8" stroke-width="1" fill="none"/></svg>
<svg class="a" style="left:807.3px;top:198.0px" width="16" height="16" viewBox="-8 -8 16 16"><path d="M-5 5 Q-7 -2 -1 -3 Q5 -3 1 2 Q-3 6 4 6" stroke="#c8c8c8" stroke-width="1" fill="none"/></svg>
<svg class="a" style="left:826.5px;top:198.0px" width="16" height="16" viewBox="-8 -8 16 16"><path d="M-6 -5 Q4 -5 6 6" stroke="#c8c8c8" stroke-width="1" fill="none"/></svg>
<svg class="a" style="left:845.5px;top:198.0px" width="16" height="16" viewBox="-8 -8 16 16"><path d="M-6 3 Q-3 -7 0 0 Q3 7 6 -3" stroke="#c8c8c8" stroke-width="1" fill="none"/></svg>
<svg class="a" style="left:864.0px;top:198.0px" width="16" height="16" viewBox="-8 -8 16 16"><path d="M2 -6 Q-1 -6 -1 -3 L-1 -1 L-3 0 L-1 1 L-1 3 Q-1 6 2 6" stroke="#c8c8c8" stroke-width="1" fill="none"/></svg>
<svg class="a" style="left:882.5px;top:198.0px" width="16" height="16" viewBox="-8 -8 16 16"><path d="M-2 -6 Q1 -6 1 -3 L1 -1 L3 0 L1 1 L1 3 Q1 6 -2 6" stroke="#c8c8c8" stroke-width="1" fill="none"/></svg>
<svg class="a" style="left:901.4px;top:198.0px" width="16" height="16" viewBox="-8 -8 16 16"><path d="M0 -6.5 L1.8 -2 L6.5 -2 L2.8 1 L4.2 6 L0 3 L-4.2 6 L-2.8 1 L-6.5 -2 L-1.8 -2Z" stroke="#c8c8c8" stroke-width="1" fill="none"/></svg>
<svg class="a" style="left:925px;top:184px;" width="6" height="7" viewBox="0 0 6 7"><path d="M0 0.5 L6 0.5 M0.5 3 L3 5.5 L5.5 3" stroke="#c8c8c8" stroke-width="1" fill="none"/></svg>
<svg class="a" style="left:948px;top:161px;" width="24" height="23" viewBox="0 0 24 23"><rect x="0.7" y="0.7" width="9" height="9" stroke="#c8c8c8" stroke-width="1.2" fill="none"/><rect x="4" y="4" width="15" height="15" fill="#e8a33a"/><rect x="13" y="13" width="9.3" height="9.3" stroke="#c8c8c8" stroke-width="1.2" fill="#2b2a2b"/></svg>
<div class="a t" style="left:943.70px;top:187.70px;font-size:9.33px;color:#f0f0f0;font-weight:400;transform:scaleX(0.9877);">Arrange</div>
<svg class="a" style="left:957px;top:204px;" width="5" height="4" viewBox="0 0 5 4"><path d="M0.5 0.5 L2.5 3.5 L4.5 0.5" stroke="#ccc" stroke-width="1" fill="none"/></svg>
<svg class="a" style="left:987px;top:161px;" width="24" height="23" viewBox="0 0 24 23"><rect x="0.7" y="0.7" width="21" height="21" stroke="#6e6e6e" stroke-width="1.2" fill="none"/><path d="M23 9 L14 19 Q12 21 10 21" stroke="#6e6e6e" stroke-width="2.2" fill="none"/></svg>
<div class="a t" style="left:985.00px;top:188.10px;font-size:9.33px;color:#808080;font-weight:400;transform:scaleX(1.0469);">Quick</div>
<div class="a t" style="left:982.00px;top:201.10px;font-size:9.33px;color:#808080;font-weight:400;transform:scaleX(1.0229);">Styles</div>
<svg class="a" style="left:1009px;top:205px;" width="5" height="4" viewBox="0 0 5 4"><path d="M0.5 0.5 L2.5 3.5 L4.5 0.5" stroke="#666" stroke-width="1" fill="none"/></svg>
<svg class="a" style="left:1021px;top:160px;" width="12" height="13" viewBox="0 0 12 13"><path d="M2 5 L6 1 L10 5 L6 9Z" stroke="#6e6e6e" stroke-width="1" fill="none"/><rect x="0" y="10.5" width="12" height="2.5" fill="#6e6e6e"/></svg>
<div class="a t" style="left:1036.50px;top:162.22px;font-size:9.19px;color:#808080;font-weight:400;transform:scaleX(1.0281);">Shape Fill</div>
<svg class="a" style="left:1079px;top:167px;" width="5" height="4" viewBox="0 0 5 4"><path d="M0.5 0.5 L2.5 3.5 L4.5 0.5" stroke="#666" stroke-width="1" fill="none"/></svg>
<svg class="a" style="left:1021px;top:181px;" width="12" height="13" viewBox="0 0 12 13"><rect x="0.5" y="0.5" width="9" height="8" stroke="#6e6e6e" stroke-width="1" fill="none"/><path d="M4 7 L11 0" stroke="#6e6e6e" stroke-width="1.4"/><rect x="0" y="10.5" width="12" height="2.5" fill="#6e6e6e"/></svg>
<div class="a t" style="left:1036.50px;top:183.02px;font-size:9.19px;color:#808080;font-weight:400;transform:scaleX(1.0297);">Shape Outline</div>
<svg class="a" style="left:1098px;top:187px;" width="5" height="4" viewBox="0 0 5 4"><path d="M0.5 0.5 L2.5 3.5 L4.5 0.5" stroke="#666" stroke-width="1" fill="none"/></svg>
<svg class="a" style="left:1021px;top:201px;" width="12" height="12" viewBox="0 0 12 12"><path d="M0.5 7 L5 1.5 L11.5 4 L7 10 Z" stroke="#6e6e6e" stroke-width="1" fill="#6e6e6e"/></svg>
<div class="a t" style="left:1036.50px;top:203.22px;font-size:9.19px;color:#808080;font-weight:400;transform:scaleX(0.9637);">Shape Effects</div>
<svg class="a" style="left:1092px;top:208px;" width="5" height="4" viewBox="0 0 5 4"><path d="M0.5 0.5 L2.5 3.5 L4.5 0.5" stroke="#666" stroke-width="1" fill="none"/></svg>
<div class="a t" style="left:932.00px;top:219.17px;font-size:8.78px;color:#f0f0f0;font-weight:400;transform:scaleX(1.0646);">Drawing</div>
<svg class="a" style="left:1104px;top:221px;" width="7" height="7" viewBox="0 0 7 7"><path d="M0.5 6.5 L0.5 0.5 L6.5 0.5 M2 2 L6.5 6.5 M3.5 6.5 L6.5 6.5 L6.5 3.5" stroke="#777" stroke-width="0.9" fill="none"/></svg>
<div class="a" style="left:1112px;top:158px;width:1px;height:69px;background:#4e4e4e;"></div>
<svg class="a" style="left:1123px;top:160px;" width="12" height="13" viewBox="0 0 12 13"><circle cx="7.5" cy="4.5" r="3.9" stroke="#c8c8c8" stroke-width="1.1" fill="none"/><path d="M4.8 7.3 L0.7 11.5" stroke="#c8c8c8" stroke-width="1.3"/></svg>
<div class="a t" style="left:1138.40px;top:161.70px;font-size:9.33px;color:#f0f0f0;font-weight:400;transform:scaleX(0.9517);">Find and Replace</div>
<svg class="a" style="left:1122px;top:181px;" width="13" height="12" viewBox="0 0 13 12"><text x="5" y="7" font-size="7" fill="#c8c8c8" font-family="Liberation Sans">A</text><path d="M4 4 Q0 6 2 10 M0.5 8.5 L2 10.5 L4 9" stroke="#3b8be0" stroke-width="1" fill="none"/><text x="8" y="12" font-size="5" fill="#c8c8c8" font-family="Liberation Sans">A</text></svg>
<div class="a t" style="left:1138.40px;top:182.50px;font-size:9.33px;color:#f0f0f0;font-weight:400;transform:scaleX(0.9474);">Replace Fonts</div>
<svg class="a" style="left:1123px;top:201px;" width="9" height="12" viewBox="0 0 9 12"><path d="M0.7 0.7 L0.7 10 L3 8 L5 11.5 L6.5 10.8 L4.5 7.5 L7.5 7.5Z" stroke="#c8c8c8" stroke-width="1" fill="none"/></svg>
<div class="a t" style="left:1137.80px;top:202.50px;font-size:9.33px;color:#f0f0f0;font-weight:400;transform:scaleX(0.9641);">Select</div>
<svg class="a" style="left:1165px;top:207px;" width="5" height="4" viewBox="0 0 5 4"><path d="M0.5 0.5 L2.5 3.5 L4.5 0.5" stroke="#ccc" stroke-width="1" fill="none"/></svg>
<div class="a t" style="left:1152.70px;top:219.57px;font-size:8.78px;color:#f0f0f0;font-weight:400;transform:scaleX(1.0683);">Editing</div>
<div class="a" style="left:1221.3px;top:158px;width:1px;height:69px;background:#4e4e4e;"></div>
<svg class="a" style="left:1246px;top:161px;" width="22" height="23" viewBox="0 0 22 23"><path d="M1 1 L11 1 L16 6 L16 12" stroke="#3a6fd8" stroke-width="1.3" fill="none"/><path d="M1 1 L1 21 L9 21" stroke="#3a6fd8" stroke-width="1.3" fill="none"/><path d="M5 13 Q8 8 8 4 Q8 13 12 14 Q6 14 4 16" stroke="#3a6fd8" stroke-width="1" fill="none"/><path d="M12 20 L19 13 Q21 11 21.5 14 L15 21 Q13 22.5 12 20Z" stroke="#3a6fd8" stroke-width="1.3" fill="none"/></svg>
<div class="a t" style="left:1241.00px;top:188.40px;font-size:9.33px;color:#f0f0f0;font-weight:400;transform:scaleX(0.9649);">Create</div>
<div class="a t" style="left:1242.40px;top:200.10px;font-size:9.33px;color:#f0f0f0;font-weight:400;transform:scaleX(0.8811);">a PDF</div>
<div class="a t" style="left:1224.00px;top:219.57px;font-size:8.78px;color:#f0f0f0;font-weight:400;transform:scaleX(1.0331);">Adobe Acrobat</div>
<div class="a" style="left:1286px;top:158px;width:1px;height:69px;background:#4e4e4e;"></div>
<svg class="a" style="left:1302px;top:160px;" width="15" height="24" viewBox="0 0 15 24"><rect x="3" y="0.5" width="9" height="15" rx="4.5" fill="#3a8ee6"/><path d="M1 10 Q1 18 7.5 18 Q14 18 14 10 M7.5 18 L7.5 23" stroke="#a8a8a8" stroke-width="1.2" fill="none"/></svg>
<div class="a t" style="left:1295.00px;top:188.60px;font-size:9.33px;color:#f0f0f0;font-weight:400;">Dictate</div>
<svg class="a" style="left:1307px;top:205px;" width="5" height="4" viewBox="0 0 5 4"><path d="M0.5 0.5 L2.5 3.5 L4.5 0.5" stroke="#ccc" stroke-width="1" fill="none"/></svg>
<div class="a t" style="left:1298.60px;top:219.57px;font-size:8.78px;color:#f0f0f0;font-weight:400;transform:scaleX(0.9830);">Voice</div>
<div class="a" style="left:1331.8px;top:158px;width:1px;height:69px;background:#4e4e4e;"></div>
<svg class="a" style="left:1345px;top:161px;" width="23" height="22" viewBox="0 0 23 22"><rect x="0.8" y="0.8" width="9.5" height="9" stroke="#e0402f" stroke-width="1.5" fill="none"/><rect x="12.7" y="0.8" width="9.5" height="9" stroke="#e0402f" stroke-width="1.5" fill="none"/><rect x="0.8" y="12.2" width="9.5" height="9" stroke="#e0402f" stroke-width="1.5" fill="none"/><rect x="12.7" y="12.2" width="9.5" height="9" stroke="#e0402f" stroke-width="1.5" fill="none"/></svg>
<div class="a t" style="left:1340.00px;top:188.10px;font-size:9.33px;color:#f0f0f0;font-weight:400;transform:scaleX(1.0436);">Add-ins</div>
<div class="a t" style="left:1341.00px;top:219.57px;font-size:8.78px;color:#f0f0f0;font-weight:400;transform:scaleX(1.0416);">Add-ins</div>
<div class="a" style="left:1381px;top:158px;width:1px;height:69px;background:#4e4e4e;"></div>
<svg class="a" style="left:1393px;top:159px;" width="26" height="23" viewBox="0 0 26 23"><rect x="5" y="6" width="20" height="16" stroke="#b0b0b0" stroke-width="1.3" fill="none"/><path d="M5 11 L25 11 M16 11 L16 22" stroke="#b0b0b0" stroke-width="1.2"/><path d="M7 0 L2 8 L6 8 L3 15 L10 6 L6 6 L9 0Z" fill="#f0b020"/></svg>
<div class="a t" style="left:1389.50px;top:188.10px;font-size:9.33px;color:#f0f0f0;font-weight:400;transform:scaleX(0.9515);">Designer</div>
<svg class="a" style="left:1434px;top:160px;" width="25" height="23" viewBox="0 0 25 23"><defs><linearGradient id="cg1" x1="0" y1="0" x2="1" y2="1"><stop offset="0" stop-color="#3fb8f0"/><stop offset="0.5" stop-color="#b05cf0"/><stop offset="1" stop-color="#f07a30"/></linearGradient><linearGradient id="cg2" x1="0" y1="1" x2="1" y2="0"><stop offset="0" stop-color="#40c060"/><stop offset="0.5" stop-color="#40a0f0"/><stop offset="1" stop-color="#f05080"/></linearGradient></defs><path d="M8 1 L17 1 Q20 1 19 5 L14 19 Q13 22 10 22 L4 22 Q1 22 2 18 L7 4 Q8 1 11 1" fill="url(#cg1)"/><path d="M14 6 L20 6 Q24 6 23 10 L19 20 Q18 22 15 22 L9 22" fill="url(#cg2)" opacity="0.85"/></svg>
<div class="a t" style="left:1430.80px;top:188.10px;font-size:9.33px;color:#f0f0f0;font-weight:400;transform:scaleX(1.0394);">Copilot</div>
<div class="a" style="left:1469px;top:158px;width:1px;height:69px;background:#4e4e4e;"></div>
<svg class="a" style="left:1497px;top:218px;" width="9" height="6" viewBox="0 0 9 6"><path d="M0.7 0.7 L4.5 4.5 L8.3 0.7" stroke="#ccc" stroke-width="1.2" fill="none"/></svg>
<div class="a" style="left:20px;top:231px;width:1499px;height:650px;background:linear-gradient(90deg,#12070f 0%,#14080f 40%,#180a0f 70%,#1b0c0f 100%);"></div>
<div class="a" style="left:517.6px;top:270px;width:729px;height:548px;background:#9a9a9a;"></div>
<div class="a" style="left:518.6px;top:271px;width:727px;height:546px;background:#fff;"></div>
<div class="a" style="left:518.6px;top:271px;width:484.4px;height:125px;background:radial-gradient(ellipse 125% 150% at 100% 65%,#31507a 0%,#2d4769 35%,#223250 60%,#151a24 82%,#0e1014 100%);"></div>
<div class="a" style="left:1003.0px;top:271px;width:242.6px;height:125px;background:radial-gradient(ellipse 150% 150% at 0% 15%,#2f4d78 0%,#2c466c 45%,#253a58 70%,#141a22 100%);"></div>
<div class="a t" style="left:657.30px;top:319.95px;font-size:30.18px;color:#fff;font-weight:400;transform:scaleX(1.0439);">Why a Design Sprint for Our Club?</div>
<div class="a" style="left:558.8px;top:441.0px;width:518.0px;height:70.5px;background:#c0504d;border-radius:6px;"></div>
<div class="a" style="left:602.6px;top:528.0px;width:517.9px;height:70.6px;background:#c0804f;border-radius:6px;"></div>
<div class="a" style="left:645.5px;top:614.5px;width:518.0px;height:69.5px;background:#bdaf58;border-radius:6px;"></div>
<div class="a" style="left:689.0px;top:700.4px;width:518.0px;height:70.3px;background:#9bbb59;border-radius:6px;"></div>
<svg class="a" style="left:1028.1px;top:495.0px" width="52.6" height="49.7"><polygon points="12.0,0.0 40.6,0.0 40.6,26.0 52.6,26.0 26.3,49.7 -0.0,26.0 12.0,26.0" fill="rgba(236,205,206,0.92)"/></svg>
<svg class="a" style="left:1071.9px;top:582.0px" width="52.6" height="48.5"><polygon points="12.0,0.0 40.6,0.0 40.6,24.8 52.6,24.8 26.3,48.5 0.0,24.8 12.0,24.8" fill="rgba(236,218,200,0.92)"/></svg>
<svg class="a" style="left:1114.7px;top:667.6px" width="52.6" height="49.4"><polygon points="12.0,0.0 40.6,0.0 40.6,25.7 52.6,25.7 26.3,49.4 0.0,25.7 12.0,25.7" fill="rgba(226,230,206,0.92)"/></svg>
<div class="a t" style="left:567.40px;top:451.92px;font-size:21.95px;color:#fff;font-weight:400;">Need to reimagine how we engage</div>
<div class="a t" style="left:567.40px;top:478.02px;font-size:21.95px;color:#fff;font-weight:400;transform:scaleX(0.9954);">members</div>
<div class="a t" style="left:610.80px;top:537.82px;font-size:21.95px;color:#fff;font-weight:400;transform:scaleX(1.0231);">Opportunity to address declining</div>
<div class="a t" style="left:610.80px;top:564.42px;font-size:21.95px;color:#fff;font-weight:400;transform:scaleX(1.0533);">participation</div>
<div class="a t" style="left:653.75px;top:623.62px;font-size:21.95px;color:#fff;font-weight:400;transform:scaleX(1.0167);">Desire to connect with new generations</div>
<div class="a t" style="left:653.75px;top:649.82px;font-size:21.95px;color:#fff;font-weight:400;transform:scaleX(1.0173);">and communities</div>
<div class="a t" style="left:697.50px;top:724.02px;font-size:21.95px;color:#fff;font-weight:400;transform:scaleX(1.0074);">Build a shared vision moving forward</div>
<div class="a" style="left:519px;top:240px;width:25px;height:26px;background:#2d2a2d;border:1px solid #6a5c62;border-radius:6px;"></div>
<svg class="a" style="left:524.5px;top:247px;" width="14" height="12" viewBox="0 0 14 12"><path d="M4 1 L8 1 Q9.5 1 9 2.5 L6.5 10 Q6 11 4.5 11 L2 11 Q0.5 11 1 9.5 L3 2.5 Q3.5 1 5 1" stroke="#e0e0e0" stroke-width="1.1" fill="none"/><path d="M7 1 L11.5 1 Q13 1 12.5 2.5 L10.5 9.5 Q10 11 8.5 11 L4.5 11" stroke="#e0e0e0" stroke-width="1.1" fill="none"/></svg>
<div class="a" style="left:240px;top:232px;width:15.5px;height:649px;background:#151115;"></div>
<div class="a" style="left:256px;top:232px;width:1px;height:613px;background:#3a3034;"></div>
<svg class="a" style="left:243px;top:236px;" width="8" height="6" viewBox="0 0 8 6"><path d="M0.5 5.5 L4 0.5 L7.5 5.5Z" fill="#a3a3a6"/></svg>
<div class="a" style="left:243px;top:245px;width:7.5px;height:266px;background:#a3a3a6;border-radius:4px;"></div>
<svg class="a" style="left:243px;top:871px;" width="8" height="6" viewBox="0 0 8 6"><path d="M0.5 0.5 L4 5.5 L7.5 0.5Z" fill="#999"/></svg>
<div class="a t" style="left:30.50px;top:245.86px;font-size:11.39px;color:#e8e8e8;font-weight:400;">1</div>
<div class="a t" style="left:30.00px;top:394.86px;font-size:11.39px;color:#e8e8e8;font-weight:400;">2</div>
<div class="a t" style="left:30.00px;top:543.86px;font-size:11.39px;color:#e8e8e8;font-weight:400;">3</div>
<div class="a t" style="left:30.00px;top:692.86px;font-size:11.39px;color:#e8e8e8;font-weight:400;">4</div>
<div class="a t" style="left:30.00px;top:841.86px;font-size:11.39px;color:#e8e8e8;font-weight:400;">5</div>
<div class="a" style="left:48px;top:247px;width:177px;height:132px;background:#fff;border-radius:3px;overflow:hidden;"></div>
<div class="a t" style="left:114.50px;top:277.56px;font-size:19.89px;color:#17458f;font-weight:700;transform:scaleX(0.9564);">Rotary</div>
<svg class="a" style="left:180px;top:268px;" width="40" height="40" viewBox="0 0 40 40"><rect x="36.24" y="18.42" width="3.17" height="3.17" fill="#f7a81b" transform="rotate(0.0 37.82 20.00)"/><rect x="35.63" y="23.03" width="3.17" height="3.17" fill="#f7a81b" transform="rotate(15.0 37.21 24.61)"/><rect x="33.85" y="27.33" width="3.17" height="3.17" fill="#f7a81b" transform="rotate(30.0 35.43 28.91)"/><rect x="31.02" y="31.02" width="3.17" height="3.17" fill="#f7a81b" transform="rotate(45.0 32.60 32.60)"/><rect x="27.33" y="33.85" width="3.17" height="3.17" fill="#f7a81b" transform="rotate(60.0 28.91 35.43)"/><rect x="23.03" y="35.63" width="3.17" height="3.17" fill="#f7a81b" transform="rotate(75.0 24.61 37.21)"/><rect x="18.42" y="36.24" width="3.17" height="3.17" fill="#f7a81b" transform="rotate(90.0 20.00 37.82)"/><rect x="13.80" y="35.63" width="3.17" height="3.17" fill="#f7a81b" transform="rotate(105.0 15.39 37.21)"/><rect x="9.51" y="33.85" width="3.17" height="3.17" fill="#f7a81b" transform="rotate(120.0 11.09 35.43)"/><rect x="5.82" y="31.02" width="3.17" height="3.17" fill="#f7a81b" transform="rotate(135.0 7.40 32.60)"/><rect x="2.98" y="27.33" width="3.17" height="3.17" fill="#f7a81b" transform="rotate(150.0 4.57 28.91)"/><rect x="1.20" y="23.03" width="3.17" height="3.17" fill="#f7a81b" transform="rotate(165.0 2.79 24.61)"/><rect x="0.60" y="18.42" width="3.17" height="3.17" fill="#f7a81b" transform="rotate(180.0 2.18 20.00)"/><rect x="1.20" y="13.80" width="3.17" height="3.17" fill="#f7a81b" transform="rotate(195.0 2.79 15.39)"/><rect x="2.98" y="9.51" width="3.17" height="3.17" fill="#f7a81b" transform="rotate(210.0 4.57 11.09)"/><rect x="5.82" y="5.82" width="3.17" height="3.17" fill="#f7a81b" transform="rotate(225.0 7.40 7.40)"/><rect x="9.51" y="2.98" width="3.17" height="3.17" fill="#f7a81b" transform="rotate(240.0 11.09 4.57)"/><rect x="13.80" y="1.20" width="3.17" height="3.17" fill="#f7a81b" transform="rotate(255.0 15.39 2.79)"/><rect x="18.42" y="0.60" width="3.17" height="3.17" fill="#f7a81b" transform="rotate(270.0 20.00 2.18)"/><rect x="23.03" y="1.20" width="3.17" height="3.17" fill="#f7a81b" transform="rotate(285.0 24.61 2.79)"/><rect x="27.33" y="2.98" width="3.17" height="3.17" fill="#f7a81b" transform="rotate(300.0 28.91 4.57)"/><rect x="31.02" y="5.82" width="3.17" height="3.17" fill="#f7a81b" transform="rotate(315.0 32.60 7.40)"/><rect x="33.85" y="9.51" width="3.17" height="3.17" fill="#f7a81b" transform="rotate(330.0 35.43 11.09)"/><rect x="35.63" y="13.80" width="3.17" height="3.17" fill="#f7a81b" transform="rotate(345.0 37.21 15.39)"/><circle cx="20" cy="20" r="17.03" fill="#f7a81b"/><circle cx="20" cy="20" r="14.26" fill="#fff"/><circle cx="20" cy="20" r="12.28" fill="none" stroke="#f7a81b" stroke-width="1.98"/><line x1="20" y1="20" x2="30.29" y2="25.94" stroke="#f7a81b" stroke-width="3.17"/><line x1="20" y1="20" x2="20.00" y2="31.88" stroke="#f7a81b" stroke-width="3.17"/><line x1="20" y1="20" x2="9.71" y2="25.94" stroke="#f7a81b" stroke-width="3.17"/><line x1="20" y1="20" x2="9.71" y2="14.06" stroke="#f7a81b" stroke-width="3.17"/><line x1="20" y1="20" x2="20.00" y2="8.12" stroke="#f7a81b" stroke-width="3.17"/><line x1="20" y1="20" x2="30.29" y2="14.06" stroke="#f7a81b" stroke-width="3.17"/><circle cx="20" cy="20" r="4.36" fill="#f7a81b"/><circle cx="20" cy="20" r="1.58" fill="#fff"/></svg>
<div class="a t" style="left:59.00px;top:301.71px;font-size:11.80px;color:#2a62ad;font-weight:400;transform:scaleX(1.0196);">San Juan Rotary Club</div>
<div class="a t" style="left:57.60px;top:315.21px;font-size:11.80px;color:#2a62ad;font-weight:400;transform:scaleX(1.0091);">San Juan, Puerto Rico</div>
<div class="a" style="left:48px;top:349px;width:117px;height:30px;background:linear-gradient(90deg,#2a3f5e 0%,#26395a 50%,#1b2940 100%);border-radius:0 0 0 3px;"></div>
<div class="a" style="left:165px;top:349px;width:60px;height:30px;background:linear-gradient(135deg,#1e3358 0%,#3f6aa6 100%);border-radius:0 0 3px 0;"></div>
<div class="a t" style="left:60.00px;top:359.25px;font-size:7.27px;color:#fff;font-weight:400;transform:scaleX(1.0471);">Rotary Club Design Sprint</div>
<div class="a" style="left:172px;top:357.5px;width:44px;height:1.3px;background:rgba(255,255,255,0.4);"></div>
<div class="a" style="left:172px;top:361.0px;width:6px;height:1.3px;background:rgba(255,255,255,0.4);"></div>
<div class="a" style="left:172px;top:364.5px;width:38px;height:1.3px;background:rgba(255,255,255,0.4);"></div>
<div class="a" style="left:172px;top:368.0px;width:25px;height:1.3px;background:rgba(255,255,255,0.4);"></div>
<div class="a" style="left:48px;top:396px;width:177px;height:132px;background:#fff;border-radius:3px;"></div>
<div class="a" style="left:48px;top:396px;width:116.1px;height:31px;background:radial-gradient(ellipse 125% 150% at 100% 65%,#31507a 0%,#2d4769 35%,#223250 60%,#151a24 82%,#0e1014 100%);"></div>
<div class="a" style="left:164.1px;top:396px;width:60.9px;height:31px;background:radial-gradient(ellipse 150% 150% at 0% 15%,#2f4d78 0%,#2c466c 45%,#253a58 70%,#141a22 100%);"></div>
<div class="a t" style="left:99.00px;top:408.11px;font-size:7.54px;color:#fff;font-weight:400;">What is a Design Sprint?</div>
<div class="a" style="left:67px;top:451.5px;width:29px;height:29px;background:#c0504d;border-radius:10px 0 10px 0;"></div>
<div class="a" style="left:122px;top:451.5px;width:29px;height:29px;background:#9bbb59;border-radius:10px 0 10px 0;"></div>
<div class="a" style="left:177px;top:451.5px;width:29px;height:29px;background:#8064a2;border-radius:10px 0 10px 0;"></div>
<svg class="a" style="left:75px;top:458px;" width="14" height="14" viewBox="0 0 14 14"><circle cx="9" cy="2" r="1.6" fill="#fff"/><path d="M3 6 L7 4 L10 7 L13 7 M7 4 L6 9 L9 11 L9 14 M6 9 L3 13 L0 13" stroke="#fff" stroke-width="1.3" fill="none"/></svg>
<svg class="a" style="left:129px;top:460px;" width="15" height="11" viewBox="0 0 15 11"><rect x="2" y="0.5" width="11" height="7" stroke="#fff" stroke-width="1" fill="none"/><path d="M0 9.5 L15 9.5" stroke="#fff" stroke-width="1.3"/></svg>
<svg class="a" style="left:184px;top:457px;" width="15" height="15" viewBox="0 0 15 15"><path d="M1 14 L10 5" stroke="#fff" stroke-width="1.3"/><path d="M10 0 L10 3 M13 2 L11.5 3.5 M15 5 L12 5 M13 8 L11.5 6.5" stroke="#fff" stroke-width="0.9"/></svg>
<div class="a" style="left:60.5px;top:489.5px;width:42px;height:2px;background:rgba(70,70,70,0.5);"></div>
<div class="a" style="left:62.5px;top:493.9px;width:38px;height:2px;background:rgba(70,70,70,0.5);"></div>
<div class="a" style="left:59.5px;top:498.3px;width:44px;height:2px;background:rgba(70,70,70,0.5);"></div>
<div class="a" style="left:114.5px;top:489.5px;width:44px;height:2px;background:rgba(70,70,70,0.5);"></div>
<div class="a" style="left:121.0px;top:493.9px;width:31px;height:2px;background:rgba(70,70,70,0.5);"></div>
<div class="a" style="left:179.0px;top:489.5px;width:25px;height:2px;background:rgba(70,70,70,0.5);"></div>
<div class="a" style="left:169.0px;top:493.9px;width:45px;height:2px;background:rgba(70,70,70,0.5);"></div>
<div class="a" style="left:174.5px;top:498.3px;width:34px;height:2px;background:rgba(70,70,70,0.5);"></div>
<div class="a" style="left:45.7px;top:543.7px;width:181.3px;height:136.3px;border:2px solid #f2a48e;border-radius:5px;"></div>
<div class="a" style="left:48px;top:546px;width:727px;height:546px;transform:scale(0.24347,0.24176);transform-origin:0 0;"><div class="a" style="left:0px;top:0px;width:727px;height:546px;background:#fff;"></div>
<div class="a" style="left:0px;top:0px;width:484.4px;height:125px;background:radial-gradient(ellipse 125% 150% at 100% 65%,#31507a 0%,#2d4769 35%,#223250 60%,#151a24 82%,#0e1014 100%);"></div>
<div class="a" style="left:484.4px;top:0px;width:242.6px;height:125px;background:radial-gradient(ellipse 150% 150% at 0% 15%,#2f4d78 0%,#2c466c 45%,#253a58 70%,#141a22 100%);"></div>
<div class="a t" style="left:138.70px;top:48.95px;font-size:30.18px;color:#fff;font-weight:400;transform:scaleX(1.0439);">Why a Design Sprint for Our Club?</div>
<div class="a" style="left:40.2px;top:170.0px;width:518.0px;height:70.5px;background:#c0504d;border-radius:6px;"></div>
<div class="a" style="left:84.0px;top:257.0px;width:517.9px;height:70.6px;background:#c0804f;border-radius:6px;"></div>
<div class="a" style="left:126.9px;top:343.5px;width:518.0px;height:69.5px;background:#bdaf58;border-radius:6px;"></div>
<div class="a" style="left:170.4px;top:429.4px;width:518.0px;height:70.3px;background:#9bbb59;border-radius:6px;"></div>
<svg class="a" style="left:509.5px;top:224.0px" width="52.6" height="49.7"><polygon points="12.0,0.0 40.6,0.0 40.6,26.0 52.6,26.0 26.3,49.7 -0.0,26.0 12.0,26.0" fill="rgba(236,205,206,0.92)"/></svg>
<svg class="a" style="left:553.3px;top:311.0px" width="52.6" height="48.5"><polygon points="12.0,0.0 40.6,0.0 40.6,24.8 52.6,24.8 26.3,48.5 0.0,24.8 12.0,24.8" fill="rgba(236,218,200,0.92)"/></svg>
<svg class="a" style="left:596.1px;top:396.6px" width="52.6" height="49.4"><polygon points="12.0,0.0 40.6,0.0 40.6,25.7 52.6,25.7 26.3,49.4 0.0,25.7 12.0,25.7" fill="rgba(226,230,206,0.92)"/></svg>
<div class="a t" style="left:48.80px;top:180.92px;font-size:21.95px;color:#fff;font-weight:400;">Need to reimagine how we engage</div>
<div class="a t" style="left:48.80px;top:207.02px;font-size:21.95px;color:#fff;font-weight:400;transform:scaleX(0.9954);">members</div>
<div class="a t" style="left:92.20px;top:266.82px;font-size:21.95px;color:#fff;font-weight:400;transform:scaleX(1.0231);">Opportunity to address declining</div>
<div class="a t" style="left:92.20px;top:293.42px;font-size:21.95px;color:#fff;font-weight:400;transform:scaleX(1.0533);">participation</div>
<div class="a t" style="left:135.15px;top:352.62px;font-size:21.95px;color:#fff;font-weight:400;transform:scaleX(1.0167);">Desire to connect with new generations</div>
<div class="a t" style="left:135.15px;top:378.82px;font-size:21.95px;color:#fff;font-weight:400;transform:scaleX(1.0173);">and communities</div>
<div class="a t" style="left:178.90px;top:453.02px;font-size:21.95px;color:#fff;font-weight:400;transform:scaleX(1.0074);">Build a shared vision moving forward</div></div>
<div class="a" style="left:48px;top:694.4px;width:177px;height:132.3px;background:#fff;border-radius:3px;"></div>
<div class="a" style="left:48px;top:694.4px;width:116.1px;height:30.2px;background:radial-gradient(ellipse 125% 150% at 100% 65%,#31507a 0%,#2d4769 35%,#223250 60%,#151a24 82%,#0e1014 100%);"></div>
<div class="a" style="left:164.1px;top:694.4px;width:60.9px;height:30.2px;background:radial-gradient(ellipse 150% 150% at 0% 15%,#2f4d78 0%,#2c466c 45%,#253a58 70%,#141a22 100%);"></div>
<div class="a t" style="left:118.00px;top:706.21px;font-size:7.54px;color:#fff;font-weight:400;transform:scaleX(1.0386);">The Process</div>
<div class="a" style="left:57.7px;top:744.8px;width:49.0px;height:28.40000000000009px;background:#c0504d;"></div>
<div class="a t" style="left:63.40px;top:755.27px;font-size:7.96px;color:#fff;font-weight:400;">Empathize</div>
<div class="a" style="left:113.2px;top:744.8px;width:47.60000000000001px;height:28.40000000000009px;background:#c0704d;"></div>
<div class="a t" style="left:125.50px;top:755.27px;font-size:7.96px;color:#fff;font-weight:400;">Define</div>
<div class="a" style="left:167.3px;top:744.8px;width:48.69999999999999px;height:28.40000000000009px;background:#bf9a50;"></div>
<div class="a t" style="left:180.59px;top:755.27px;font-size:7.96px;color:#fff;font-weight:400;">Ideate</div>
<div class="a" style="left:85.8px;top:779px;width:48.2px;height:28.5px;background:#bbb456;"></div>
<div class="a t" style="left:92.87px;top:789.52px;font-size:7.96px;color:#fff;font-weight:400;">Prototype</div>
<div class="a" style="left:139.6px;top:779px;width:48.900000000000006px;height:28.5px;background:#9bbb59;"></div>
<div class="a t" style="left:156.75px;top:789.52px;font-size:7.96px;color:#fff;font-weight:400;">Test</div>
<div class="a" style="left:48px;top:843.5px;width:177px;height:36px;background:#fff;border-radius:3px 3px 0 0;overflow:hidden;"></div>
<div class="a" style="left:48px;top:843.5px;width:116.1px;height:30.1px;background:radial-gradient(ellipse 125% 150% at 100% 65%,#31507a 0%,#2d4769 35%,#223250 60%,#151a24 82%,#0e1014 100%);"></div>
<div class="a" style="left:164.1px;top:843.5px;width:60.9px;height:30.1px;background:radial-gradient(ellipse 150% 150% at 0% 15%,#2f4d78 0%,#2c466c 45%,#253a58 70%,#141a22 100%);"></div>
<div class="a t" style="left:74.80px;top:855.21px;font-size:7.54px;color:#fff;font-weight:400;transform:scaleX(1.0497);">What We Heard – Member Interviews</div>
<div class="a" style="left:1506.3px;top:232px;width:12.7px;height:567px;background:#18161a;border-radius:6px;"></div>
<svg class="a" style="left:1509px;top:236px;" width="8" height="6" viewBox="0 0 8 6"><path d="M0.5 5.5 L4 0.5 L7.5 5.5Z" fill="#a3a3a6"/></svg>
<div class="a" style="left:1509px;top:354px;width:7px;height:54px;background:#a3a3a6;border-radius:3.5px;"></div>
<svg class="a" style="left:1508px;top:793px;" width="8" height="6" viewBox="0 0 8 6"><path d="M0.5 0.5 L4 5.5 L7.5 0.5Z" fill="#999"/></svg>
<svg class="a" style="left:1508.5px;top:804px;" width="8" height="10" viewBox="0 0 8 10"><path d="M0.5 4.5 L4 0.5 L7.5 4.5Z M0.5 9.5 L4 5.5 L7.5 9.5Z" fill="#aaa"/></svg>
<svg class="a" style="left:1508.5px;top:817px;" width="8" height="10" viewBox="0 0 8 10"><path d="M0.5 0.5 L4 4.5 L7.5 0.5Z M0.5 5.5 L4 9.5 L7.5 5.5Z" fill="#aaa"/></svg>
<div class="a" style="left:258px;top:844px;width:1260px;height:1.5px;background:#3a3034;"></div>
<div class="a t" style="left:265.00px;top:851.70px;font-size:11.93px;color:#cfcfcf;font-weight:400;transform:scaleX(0.9591);">Click to add notes</div>
<div class="a" style="left:20px;top:880.5px;width:1499px;height:18px;background:#171517;border-top:1px solid #2e2a2d;"></div>
<div class="a t" style="left:29.00px;top:885.28px;font-size:8.64px;color:#e0e0e0;font-weight:400;transform:scaleX(1.0323);">Slide 3 of 10</div>
<div class="a t" style="left:103.50px;top:885.28px;font-size:8.64px;color:#e0e0e0;font-weight:400;transform:scaleX(1.0264);">English (United States)</div>
<svg class="a" style="left:207px;top:884px;" width="11" height="11" viewBox="0 0 11 11"><circle cx="5.5" cy="1.5" r="1.3" fill="#ddd"/><path d="M0.5 3.5 L10.5 3.5 M5.5 3.5 L5.5 7 L2.5 10.5 M5.5 7 L8.5 10.5 M1.5 6 L9.5 10 M9.5 6 L1.5 10" stroke="#ddd" stroke-width="0.9" fill="none"/></svg>
<div class="a t" style="left:221.00px;top:885.28px;font-size:8.64px;color:#fff;font-weight:700;transform:scaleX(0.9586);">Accessibility: Investigate</div>
<svg class="a" style="left:1187px;top:884px;" width="14" height="12" viewBox="0 0 14 12"><path d="M3.5 3 L7 0.5 L10.5 3" stroke="#ddd" stroke-width="0.9" fill="none"/><rect x="0" y="4.5" width="14" height="1" fill="#ddd"/><rect x="0" y="7.5" width="14" height="1" fill="#ddd"/><rect x="0" y="10.5" width="14" height="1" fill="#ddd"/></svg>
<div class="a t" style="left:1200.80px;top:886.20px;font-size:8.92px;color:#e8e8e8;font-weight:400;transform:scaleX(1.0227);">Notes</div>
<div class="a" style="left:1239px;top:881px;width:32px;height:17.5px;background:#2b2b2b;"></div>
<svg class="a" style="left:1250px;top:884px;" width="12" height="11" viewBox="0 0 12 11"><rect x="0.5" y="0.5" width="11" height="10" stroke="#ddd" stroke-width="0.9" fill="none"/><rect x="2" y="2" width="3" height="7" stroke="#ddd" stroke-width="0.8" fill="none"/></svg>
<svg class="a" style="left:1281px;top:884px;" width="11" height="11" viewBox="0 0 11 11"><rect x="0.5" y="0.5" width="4" height="4" stroke="#ddd" stroke-width="0.9" fill="none"/><rect x="6.5" y="0.5" width="4" height="4" stroke="#ddd" stroke-width="0.9" fill="none"/><rect x="0.5" y="6.5" width="4" height="4" stroke="#ddd" stroke-width="0.9" fill="none"/><rect x="6.5" y="6.5" width="4" height="4" stroke="#ddd" stroke-width="0.9" fill="none"/></svg>
<svg class="a" style="left:1312px;top:884px;" width="11" height="11" viewBox="0 0 11 11"><path d="M0.5 1 L5.5 2 L10.5 1 L10.5 10 L5.5 10.5 L0.5 10Z M5.5 2 L5.5 10.5 M2 4 L4 4 M2 6 L4 6 M7 4 L9 4 M7 6 L9 6" stroke="#ddd" stroke-width="0.9" fill="none"/></svg>
<svg class="a" style="left:1343px;top:884px;" width="11" height="12" viewBox="0 0 11 12"><rect x="0.5" y="0.5" width="10" height="6" stroke="#ddd" stroke-width="0.9" fill="none"/><path d="M5.5 6.5 L5.5 11 M3 11 L8 11 M3 2.5 L8 2.5" stroke="#ddd" stroke-width="0.9"/></svg>
<div class="a" style="left:1372px;top:889px;width:5px;height:1px;background:#ccc;"></div>
<div class="a" style="left:1380px;top:889.5px;width:77px;height:1px;background:#888;"></div>
<div class="a" style="left:1414px;top:885px;width:4px;height:9px;background:#bbb;"></div>
<svg class="a" style="left:1461px;top:886px;" width="7" height="7" viewBox="0 0 7 7"><path d="M3.5 0 L3.5 7 M0 3.5 L7 3.5" stroke="#ccc" stroke-width="1"/></svg>
<div class="a t" style="left:1477.60px;top:886.28px;font-size:8.64px;color:#e0e0e0;font-weight:400;transform:scaleX(0.9373);">97%</div>
<svg class="a" style="left:1503px;top:884px;" width="13" height="12" viewBox="0 0 13 12"><rect x="3" y="2.5" width="7" height="7" stroke="#ccc" stroke-width="0.9" fill="none"/><path d="M0.5 6 L2.5 4 M0.5 6 L2.5 8 M12.5 6 L10.5 4 M12.5 6 L10.5 8 M6.5 0 L4.5 2 M6.5 0 L8.5 2 M6.5 12 L4.5 10 M6.5 12 L8.5 10" stroke="#ccc" stroke-width="0.9" fill="none"/></svg>
<div class="a" style="left:1545px;top:118px;width:352px;height:792px;background:#222;border-radius:8px;"></div>
<svg class="a" style="left:1545px;top:118px;overflow:hidden;border-radius:8px 0 0 0;" width="176" height="98" viewBox="0 0 176 98"><defs><filter id="bl1545118" x="-20%" y="-20%" width="140%" height="140%"><feGaussianBlur stdDeviation="1.6"/></filter></defs><g filter="url(#bl1545118)">
      <rect x="-5" y="-5" width="190" height="110" fill="#7a5050"/>
      <rect x="-5" y="-5" width="88" height="110" fill="#6a1418"/>
      <rect x="4" y="8" width="72" height="44" fill="#3a0a10"/>
      <rect x="4" y="56" width="72" height="22" fill="#2a0a0e"/>
      <rect x="-5" y="-5" width="10" height="60" fill="#c08048"/>
      <rect x="6" y="-5" width="70" height="11" fill="#8a5030"/>
      <rect x="7" y="27" width="15" height="25" fill="#e4e8f0"/>
      <rect x="19" y="30" width="9" height="21" fill="#3a5aa8"/>
      <rect x="66" y="34" width="5" height="18" fill="#f0f0f0"/>
      <rect x="44" y="26" width="14" height="24" fill="#6a4a30"/>
      <rect x="40" y="62" width="22" height="15" fill="#f0f0f0"/>
      <rect x="40" y="70" width="10" height="7" fill="#e0a040"/>
      <rect x="32" y="57" width="22" height="5" fill="#d8d8d8"/>
      <rect x="62" y="63" width="14" height="8" fill="#e8e8e8"/>
      <rect x="78" y="-5" width="52" height="110" fill="#b0a890"/>
      <rect x="80" y="4" width="50" height="2" fill="#909088"/>
      <rect x="80" y="34" width="50" height="2" fill="#909088"/>
      <rect x="80" y="64" width="50" height="2" fill="#909088"/>
      <rect x="83" y="10" width="18" height="10" fill="#602020"/>
      <rect x="82" y="21" width="19" height="13" fill="#ece8e0"/>
      <rect x="109" y="24" width="11" height="10" fill="#30b0a8"/>
      <rect x="106" y="38" width="14" height="8" fill="#e8e4dc"/>
      <rect x="108" y="46" width="10" height="14" fill="#3050a0"/>
      <rect x="84" y="52" width="20" height="12" fill="#504040"/>
      <rect x="130" y="-5" width="14" height="50" fill="#3a2024"/>
      <rect x="144" y="-5" width="40" height="110" fill="#7a5058"/>
      <ellipse cx="112" cy="72" rx="12" ry="10" fill="#8a8a90"/>
      <ellipse cx="142" cy="104" rx="44" ry="34" fill="#d8b4c4"/>
      <ellipse cx="139" cy="47" rx="18" ry="24" fill="#dcbcac"/>
      <ellipse cx="139" cy="30" rx="19" ry="14" fill="#d4d0cc"/>
      <rect x="122" y="39" width="34" height="9" rx="4" fill="#5a3a34" opacity="0.55"/>
    </g></svg>
<svg class="a" style="left:1721px;top:118px;overflow:hidden;border-radius:0 8px 0 0;" width="176" height="98" viewBox="0 0 176 98"><defs><filter id="bl1721118" x="-20%" y="-20%" width="140%" height="140%"><feGaussianBlur stdDeviation="1.6"/></filter></defs><g filter="url(#bl1721118)">
      <rect x="-5" y="-5" width="190" height="110" fill="#0d5262"/>
      <ellipse cx="90" cy="10" rx="90" ry="40" fill="#127484" opacity="0.8"/>
      <rect x="-5" y="60" width="60" height="45" fill="#0a3a4a" opacity="0.7"/>
      <ellipse cx="90" cy="100" rx="72" ry="62" fill="none" stroke="#2aa0b4" stroke-width="9" opacity="0.55"/>
      <ellipse cx="90" cy="100" rx="60" ry="48" fill="#0e4c5c" opacity="0.6"/>
      <ellipse cx="80" cy="108" rx="56" ry="36" fill="#ececec"/>
      <ellipse cx="78" cy="56" rx="18" ry="25" fill="#b48e80"/>
      <ellipse cx="78" cy="36" rx="18" ry="13" fill="#dcdcdc"/>
      <rect x="62" y="51" width="32" height="10" rx="4" fill="#806a66" opacity="0.6"/>
    </g></svg>
<div class="a t" style="left:1730.00px;top:128.77px;font-size:6.17px;color:#fff;font-weight:700;transform:scaleX(0.9463);">#RotaryResponds</div>
<div class="a t" style="left:1730.00px;top:135.77px;font-size:6.17px;color:#fff;font-weight:700;transform:scaleX(1.0061);">#PeopleofAction</div>
<div class="a t" style="left:1835.50px;top:130.45px;font-size:8.92px;color:#fff;font-weight:700;transform:scaleX(0.9906);">Rotary</div>
<svg class="a" style="left:1865px;top:127px;" width="18" height="18" viewBox="0 0 18 18"><rect x="15.78" y="8.12" width="1.76" height="1.76" fill="#e8b030" transform="rotate(0.0 16.66 9.00)"/><rect x="15.52" y="10.10" width="1.76" height="1.76" fill="#e8b030" transform="rotate(15.0 16.40 10.98)"/><rect x="14.75" y="11.95" width="1.76" height="1.76" fill="#e8b030" transform="rotate(30.0 15.63 12.83)"/><rect x="13.53" y="13.53" width="1.76" height="1.76" fill="#e8b030" transform="rotate(45.0 14.41 14.41)"/><rect x="11.95" y="14.75" width="1.76" height="1.76" fill="#e8b030" transform="rotate(60.0 12.83 15.63)"/><rect x="10.10" y="15.52" width="1.76" height="1.76" fill="#e8b030" transform="rotate(75.0 10.98 16.40)"/><rect x="8.12" y="15.78" width="1.76" height="1.76" fill="#e8b030" transform="rotate(90.0 9.00 16.66)"/><rect x="6.14" y="15.52" width="1.76" height="1.76" fill="#e8b030" transform="rotate(105.0 7.02 16.40)"/><rect x="4.29" y="14.75" width="1.76" height="1.76" fill="#e8b030" transform="rotate(120.0 5.17 15.63)"/><rect x="2.71" y="13.53" width="1.76" height="1.76" fill="#e8b030" transform="rotate(135.0 3.59 14.41)"/><rect x="1.49" y="11.95" width="1.76" height="1.76" fill="#e8b030" transform="rotate(150.0 2.37 12.83)"/><rect x="0.72" y="10.10" width="1.76" height="1.76" fill="#e8b030" transform="rotate(165.0 1.60 10.98)"/><rect x="0.46" y="8.12" width="1.76" height="1.76" fill="#e8b030" transform="rotate(180.0 1.34 9.00)"/><rect x="0.72" y="6.14" width="1.76" height="1.76" fill="#e8b030" transform="rotate(195.0 1.60 7.02)"/><rect x="1.49" y="4.29" width="1.76" height="1.76" fill="#e8b030" transform="rotate(210.0 2.37 5.17)"/><rect x="2.71" y="2.71" width="1.76" height="1.76" fill="#e8b030" transform="rotate(225.0 3.59 3.59)"/><rect x="4.29" y="1.49" width="1.76" height="1.76" fill="#e8b030" transform="rotate(240.0 5.17 2.37)"/><rect x="6.14" y="0.72" width="1.76" height="1.76" fill="#e8b030" transform="rotate(255.0 7.02 1.60)"/><rect x="8.12" y="0.46" width="1.76" height="1.76" fill="#e8b030" transform="rotate(270.0 9.00 1.34)"/><rect x="10.10" y="0.72" width="1.76" height="1.76" fill="#e8b030" transform="rotate(285.0 10.98 1.60)"/><rect x="11.95" y="1.49" width="1.76" height="1.76" fill="#e8b030" transform="rotate(300.0 12.83 2.37)"/><rect x="13.53" y="2.71" width="1.76" height="1.76" fill="#e8b030" transform="rotate(315.0 14.41 3.59)"/><rect x="14.75" y="4.29" width="1.76" height="1.76" fill="#e8b030" transform="rotate(330.0 15.63 5.17)"/><rect x="15.52" y="6.14" width="1.76" height="1.76" fill="#e8b030" transform="rotate(345.0 16.40 7.02)"/><circle cx="9" cy="9" r="7.48" fill="#e8b030"/><circle cx="9" cy="9" r="5.81" fill="none" stroke="#126a7a" stroke-opacity="0.55" stroke-width="0.53"/><circle cx="9" cy="9" r="4.40" fill="#126a7a"/><line x1="9" y1="9" x2="12.96" y2="11.29" stroke="#e8b030" stroke-width="1.06"/><line x1="9" y1="9" x2="9.00" y2="13.58" stroke="#e8b030" stroke-width="1.06"/><line x1="9" y1="9" x2="5.04" y2="11.29" stroke="#e8b030" stroke-width="1.06"/><line x1="9" y1="9" x2="5.04" y2="6.71" stroke="#e8b030" stroke-width="1.06"/><line x1="9" y1="9" x2="9.00" y2="4.42" stroke="#e8b030" stroke-width="1.06"/><line x1="9" y1="9" x2="12.96" y2="6.71" stroke="#e8b030" stroke-width="1.06"/><circle cx="9" cy="9" r="1.58" fill="#e8b030"/><circle cx="9" cy="9" r="0.62" fill="#126a7a"/></svg>
<svg class="a" style="left:1545px;top:217px;overflow:hidden;" width="176" height="99" viewBox="0 0 176 99"><defs><filter id="bl1545217" x="-20%" y="-20%" width="140%" height="140%"><feGaussianBlur stdDeviation="1.6"/></filter></defs><g filter="url(#bl1545217)">
      <rect x="-5" y="-5" width="190" height="110" fill="#141a5a"/>
      <polygon points="-5,10 10,-5 60,-5 20,60 -5,80" fill="#1e3aa0"/>
      <polygon points="10,-5 80,-5 120,40 70,80 20,40" fill="#3648b0"/>
      <polygon points="45,35 80,0 112,33 80,70" fill="#4c5cc8"/>
      <polygon points="70,80 120,40 175,99 110,105" fill="#2a3c9c"/>
      <polygon points="-5,80 35,45 85,105 -5,105" fill="#10185a"/>
      <polygon points="112,33 150,-5 185,-5 185,80" fill="#121858"/>
      <path d="M78 105 Q82 72 110 74 Q150 76 162 105Z" fill="#60b4a4"/>
      <ellipse cx="116" cy="56" rx="17" ry="23" fill="#d8b4a4"/>
      <ellipse cx="114" cy="78" rx="14" ry="10" fill="#f0f0ee"/>
      <rect x="100" y="50" width="28" height="8" rx="3" fill="#404040" opacity="0.55"/>
      <ellipse cx="140" cy="66" rx="8" ry="18" fill="#d0a890"/>
    </g></svg>
<svg class="a" style="left:1561px;top:227px;" width="24" height="24" viewBox="0 0 24 24"><circle cx="12" cy="12" r="10.5" stroke="#fff" stroke-width="1" fill="none"/><path d="M5 14 Q10 8 18 6 Q14 12 8 17Z" fill="#fff" opacity="0.8"/></svg>
<div class="a" style="left:1558px;top:255px;width:32px;height:1.5px;background:rgba(255,255,255,0.6);"></div>
<div class="a" style="left:1560px;top:259px;width:28px;height:1.2px;background:rgba(255,255,255,0.5);"></div>
<div class="a t" style="left:1661.50px;top:232.80px;font-size:8.50px;color:#fff;font-weight:700;transform:scaleX(1.0386);">Rotary</div>
<svg class="a" style="left:1692px;top:226px;" width="18" height="18" viewBox="0 0 18 18"><rect x="15.78" y="8.12" width="1.76" height="1.76" fill="#c89a30" transform="rotate(0.0 16.66 9.00)"/><rect x="15.52" y="10.10" width="1.76" height="1.76" fill="#c89a30" transform="rotate(15.0 16.40 10.98)"/><rect x="14.75" y="11.95" width="1.76" height="1.76" fill="#c89a30" transform="rotate(30.0 15.63 12.83)"/><rect x="13.53" y="13.53" width="1.76" height="1.76" fill="#c89a30" transform="rotate(45.0 14.41 14.41)"/><rect x="11.95" y="14.75" width="1.76" height="1.76" fill="#c89a30" transform="rotate(60.0 12.83 15.63)"/><rect x="10.10" y="15.52" width="1.76" height="1.76" fill="#c89a30" transform="rotate(75.0 10.98 16.40)"/><rect x="8.12" y="15.78" width="1.76" height="1.76" fill="#c89a30" transform="rotate(90.0 9.00 16.66)"/><rect x="6.14" y="15.52" width="1.76" height="1.76" fill="#c89a30" transform="rotate(105.0 7.02 16.40)"/><rect x="4.29" y="14.75" width="1.76" height="1.76" fill="#c89a30" transform="rotate(120.0 5.17 15.63)"/><rect x="2.71" y="13.53" width="1.76" height="1.76" fill="#c89a30" transform="rotate(135.0 3.59 14.41)"/><rect x="1.49" y="11.95" width="1.76" height="1.76" fill="#c89a30" transform="rotate(150.0 2.37 12.83)"/><rect x="0.72" y="10.10" width="1.76" height="1.76" fill="#c89a30" transform="rotate(165.0 1.60 10.98)"/><rect x="0.46" y="8.12" width="1.76" height="1.76" fill="#c89a30" transform="rotate(180.0 1.34 9.00)"/><rect x="0.72" y="6.14" width="1.76" height="1.76" fill="#c89a30" transform="rotate(195.0 1.60 7.02)"/><rect x="1.49" y="4.29" width="1.76" height="1.76" fill="#c89a30" transform="rotate(210.0 2.37 5.17)"/><rect x="2.71" y="2.71" width="1.76" height="1.76" fill="#c89a30" transform="rotate(225.0 3.59 3.59)"/><rect x="4.29" y="1.49" width="1.76" height="1.76" fill="#c89a30" transform="rotate(240.0 5.17 2.37)"/><rect x="6.14" y="0.72" width="1.76" height="1.76" fill="#c89a30" transform="rotate(255.0 7.02 1.60)"/><rect x="8.12" y="0.46" width="1.76" height="1.76" fill="#c89a30" transform="rotate(270.0 9.00 1.34)"/><rect x="10.10" y="0.72" width="1.76" height="1.76" fill="#c89a30" transform="rotate(285.0 10.98 1.60)"/><rect x="11.95" y="1.49" width="1.76" height="1.76" fill="#c89a30" transform="rotate(300.0 12.83 2.37)"/><rect x="13.53" y="2.71" width="1.76" height="1.76" fill="#c89a30" transform="rotate(315.0 14.41 3.59)"/><rect x="14.75" y="4.29" width="1.76" height="1.76" fill="#c89a30" transform="rotate(330.0 15.63 5.17)"/><rect x="15.52" y="6.14" width="1.76" height="1.76" fill="#c89a30" transform="rotate(345.0 16.40 7.02)"/><circle cx="9" cy="9" r="7.48" fill="#c89a30"/><circle cx="9" cy="9" r="5.81" fill="none" stroke="#141a5a" stroke-opacity="0.55" stroke-width="0.53"/><circle cx="9" cy="9" r="4.40" fill="#141a5a"/><line x1="9" y1="9" x2="12.96" y2="11.29" stroke="#c89a30" stroke-width="1.06"/><line x1="9" y1="9" x2="9.00" y2="13.58" stroke="#c89a30" stroke-width="1.06"/><line x1="9" y1="9" x2="5.04" y2="11.29" stroke="#c89a30" stroke-width="1.06"/><line x1="9" y1="9" x2="5.04" y2="6.71" stroke="#c89a30" stroke-width="1.06"/><line x1="9" y1="9" x2="9.00" y2="4.42" stroke="#c89a30" stroke-width="1.06"/><line x1="9" y1="9" x2="12.96" y2="6.71" stroke="#c89a30" stroke-width="1.06"/><circle cx="9" cy="9" r="1.58" fill="#c89a30"/><circle cx="9" cy="9" r="0.62" fill="#141a5a"/></svg>
<svg class="a" style="left:1721px;top:217px;overflow:hidden;" width="176" height="99" viewBox="0 0 176 99"><defs><filter id="bl1721217" x="-20%" y="-20%" width="140%" height="140%"><feGaussianBlur stdDeviation="1.6"/></filter></defs><g filter="url(#bl1721217)">
      <rect x="-5" y="-5" width="190" height="110" fill="#d2d2d4"/>
      <ellipse cx="80" cy="5" rx="120" ry="30" fill="#e2e2e4"/>
      <rect x="22" y="40" width="40" height="38" fill="#ececee"/>
      <rect x="124" y="70" width="56" height="35" fill="#8a8078"/>
      <rect x="123" y="68" width="14" height="10" fill="#c0b8b0"/>
      <rect x="152" y="70" width="16" height="10" fill="#d8d0c0"/>
      <ellipse cx="90" cy="48" rx="33" ry="40" fill="#6a4838"/>
      <ellipse cx="90" cy="54" rx="21" ry="31" fill="#d8a898"/>
      <rect x="69" y="32" width="43" height="14" rx="5" fill="#1e1a1a"/>
      <rect x="72" y="34" width="16" height="9" rx="3" fill="#7a6a68"/>
      <rect x="93" y="34" width="16" height="9" rx="3" fill="#7a6a68"/>
      <ellipse cx="87" cy="61" rx="7" ry="3.2" fill="#9a2a2a"/>
      <ellipse cx="96" cy="104" rx="56" ry="26" fill="#dcc0b8"/>
      <ellipse cx="132" cy="92" rx="16" ry="14" fill="#e0a8a0"/>
      <ellipse cx="80" cy="78" rx="10" ry="7" fill="#e0a8a0"/>
    </g></svg>
<div class="a" style="left:1721px;top:217px;width:176px;height:99px;border:2px solid #27e08c;"></div>
<div class="a" style="left:1545px;top:316px;width:176px;height:99px;background:#8d8c91;"></div>
<svg class="a" style="left:1623px;top:354px;" width="21" height="22" viewBox="0 0 21 22"><circle cx="10.5" cy="6.5" r="5.8" stroke="#fff" stroke-width="1.2" fill="none"/><circle cx="10.5" cy="6.5" r="2" fill="#fff"/><path d="M4 9 L2.5 18 L18.5 18 L17 9" stroke="#fff" stroke-width="1.2" fill="none"/><path d="M0.5 21 L20.5 21" stroke="#fff" stroke-width="1.4"/></svg>
<svg class="a" style="left:1721px;top:316px;overflow:hidden;" width="176" height="99" viewBox="0 0 176 99"><defs><filter id="bl1721316" x="-20%" y="-20%" width="140%" height="140%"><feGaussianBlur stdDeviation="1.6"/></filter></defs><g filter="url(#bl1721316)">
      <rect x="-5" y="-5" width="190" height="110" fill="#c8c0b0"/>
      <rect x="-5" y="-5" width="60" height="110" fill="#d4d0c6"/>
      <ellipse cx="160" cy="22" rx="48" ry="36" fill="#e4cc8c"/>
      <ellipse cx="118" cy="70" rx="30" ry="40" fill="#b0a080" opacity="0.6"/>
      <ellipse cx="148" cy="60" rx="9" ry="50" fill="#4a3a28" opacity="0.9"/>
      <rect x="36" y="84" width="96" height="25" fill="#90a8c4"/>
      <ellipse cx="79" cy="58" rx="27" ry="38" fill="#b8887a"/>
      <ellipse cx="79" cy="30" rx="22" ry="13" fill="#cfa594"/>
      <ellipse cx="78" cy="82" rx="24" ry="18" fill="#d2ccc8"/>
      <rect x="52" y="42" width="54" height="12" rx="4" fill="#5a4038" opacity="0.5"/>
    </g></svg>
<svg class="a" style="left:1545px;top:415px;overflow:hidden;" width="176" height="99" viewBox="0 0 176 99"><defs><filter id="bl1545415" x="-20%" y="-20%" width="140%" height="140%"><feGaussianBlur stdDeviation="1.6"/></filter></defs><g filter="url(#bl1545415)">
      <rect x="-5" y="-5" width="190" height="110" fill="#625650"/>
      <rect x="-5" y="-5" width="190" height="18" fill="#5a5252"/>
      <rect x="-5" y="0" width="16" height="105" fill="#8a7c74"/>
      <rect x="12" y="0" width="60" height="105" fill="#4a2820"/>
      <rect x="76" y="18" width="100" height="90" fill="#726660"/>
      <rect x="88" y="24" width="30" height="56" fill="#c0a878"/>
      <rect x="88" y="80" width="30" height="25" fill="#d8d0c0"/>
      <rect x="131" y="22" width="38" height="75" fill="#e6dcc0"/>
      <ellipse cx="36" cy="86" rx="40" ry="40" fill="#5a4238"/>
      <ellipse cx="38" cy="92" rx="30" ry="26" fill="#8a6454"/>
      <ellipse cx="158" cy="96" rx="15" ry="13" fill="#6a4a3a"/>
    </g></svg>
<svg class="a" style="left:1781px;top:415px;overflow:hidden;" width="57" height="99" viewBox="0 0 57 99"><defs><filter id="bl1781415" x="-20%" y="-20%" width="140%" height="140%"><feGaussianBlur stdDeviation="1.6"/></filter></defs><g filter="url(#bl1781415)">
      <rect x="-5" y="-5" width="70" height="110" fill="#e4e4e4"/>
      <rect x="-5" y="8" width="70" height="6" fill="#d0a060"/>
      <rect x="0" y="22" width="30" height="40" fill="#f4f4f4"/>
      <rect x="0" y="26" width="26" height="4" fill="#c87850"/>
      <polygon points="8,46 10,50 14,50 11,53 12,57 8,54 4,57 5,53 2,50 6,50" fill="#d03030"/>
      <ellipse cx="37" cy="52" rx="16" ry="22" fill="#1e1a1a"/>
      <ellipse cx="39" cy="58" rx="13" ry="17" fill="#b08070"/>
      <rect x="29" y="48" width="20" height="6" rx="2" fill="#6a2a30" opacity="0.6"/>
      <ellipse cx="36" cy="104" rx="36" ry="28" fill="#222222"/>
    </g></svg>
<div class="a" style="left:1593.6px;top:524.6px;width:78.4px;height:78.4px;background:#0a5aa8;border-radius:6px;"></div>
<div class="a t" style="left:1617px;top:540px;font-size:40px;color:#fff;font-weight:400;transform:scaleX(0.9);">A</div>
<div class="a t" style="left:1745.50px;top:555.69px;font-size:14.54px;color:#fff;font-weight:700;transform:scaleX(1.0186);">Enid's  Notetake...</div>
<div class="a t" style="left:1569.80px;top:654.49px;font-size:14.54px;color:#fff;font-weight:700;transform:scaleX(1.0274);">Robert's  Noteta...</div>
<div class="a t" style="left:1758.40px;top:654.49px;font-size:14.54px;color:#fff;font-weight:700;transform:scaleX(0.9800);">Jorge’s iPhone</div>
<div class="a t" style="left:1568.00px;top:753.69px;font-size:14.54px;color:#fff;font-weight:700;transform:scaleX(1.0160);">Juanita  Valentin...</div>
<div class="a t" style="left:1743.50px;top:753.69px;font-size:14.54px;color:#fff;font-weight:700;transform:scaleX(0.9558);">CPA  Luis  Ramíre...</div>
<div class="a t" style="left:1576.30px;top:852.29px;font-size:14.54px;color:#fff;font-weight:700;transform:scaleX(1.0287);">Juan Woodroffe</div>
<svg class="a" style="left:1770px;top:822px;overflow:hidden;border-radius:6px;" width="78" height="78" viewBox="0 0 78 78"><defs><filter id="bl1770822" x="-20%" y="-20%" width="140%" height="140%"><feGaussianBlur stdDeviation="1.6"/></filter></defs><g filter="url(#bl1770822)">
      <rect x="-5" y="-5" width="90" height="90" fill="#b02818"/>
      <ellipse cx="70" cy="25" rx="16" ry="26" fill="#e88a40"/>
      <rect x="0" y="4" width="30" height="5" fill="#e8a050"/>
      <rect x="6" y="20" width="6" height="40" fill="#d06030"/>
      <ellipse cx="40" cy="92" rx="46" ry="44" fill="#bcbab8"/>
      <rect x="31" y="48" width="16" height="32" fill="#f4f0ee"/>
      <rect x="36" y="56" width="7" height="24" fill="#d8302a"/>
      <ellipse cx="39" cy="32" rx="12" ry="16" fill="#d09484"/>
      <ellipse cx="39" cy="18" rx="13" ry="7" fill="#282020"/>
    </g></svg>
<div class="a" style="left:1548.7px;top:196px;width:158.29999999999995px;height:19px;background:rgba(26,26,26,0.72);border-radius:4px;"></div>
<svg class="a" style="left:1550.7px;top:199px;" width="14" height="14" viewBox="0 0 14 14"><path d="M5 2.5 Q5 0.8 7 0.8 Q9 0.8 9 2.5 L9 7 Q9 8.8 7 8.8 Q5 8.8 5 7Z" fill="#e8484a"/><path d="M3 6.5 Q3 10.5 7 10.5 Q11 10.5 11 6.5 M7 10.5 L7 13 M4.5 13 L9.5 13" stroke="#e8484a" stroke-width="1.2" fill="none"/><path d="M1 13.5 L13 0.5" stroke="#e8484a" stroke-width="1.5"/></svg>
<div class="a t" style="left:1569.70px;top:199.95px;font-size:11.52px;color:#fff;font-weight:400;transform:scaleX(1.1406);">Antonio Jose Colorado</div>
<div class="a" style="left:1724px;top:196px;width:106px;height:19px;background:rgba(26,26,26,0.72);border-radius:4px;"></div>
<div class="a t" style="left:1727.40px;top:199.95px;font-size:11.52px;color:#fff;font-weight:400;transform:scaleX(1.0635);">Jose Rivero, EGD</div>
<div class="a" style="left:1548.7px;top:295px;width:101.29999999999995px;height:19px;background:rgba(26,26,26,0.72);border-radius:4px;"></div>
<div class="a t" style="left:1551.40px;top:298.95px;font-size:11.52px;color:#fff;font-weight:400;transform:scaleX(1.1134);">Gerry Cumpiano</div>
<div class="a" style="left:1724px;top:295px;width:108px;height:19px;background:rgba(26,26,26,0.72);border-radius:4px;"></div>
<div class="a t" style="left:1727.40px;top:298.95px;font-size:11.52px;color:#fff;font-weight:400;transform:scaleX(1.0999);">Enid Marie Reyes</div>
<div class="a" style="left:1548.7px;top:394px;width:98.29999999999995px;height:19px;background:rgba(26,26,26,0.72);border-radius:4px;"></div>
<svg class="a" style="left:1550.7px;top:397px;" width="14" height="14" viewBox="0 0 14 14"><path d="M5 2.5 Q5 0.8 7 0.8 Q9 0.8 9 2.5 L9 7 Q9 8.8 7 8.8 Q5 8.8 5 7Z" fill="#e8484a"/><path d="M3 6.5 Q3 10.5 7 10.5 Q11 10.5 11 6.5 M7 10.5 L7 13 M4.5 13 L9.5 13" stroke="#e8484a" stroke-width="1.2" fill="none"/><path d="M1 13.5 L13 0.5" stroke="#e8484a" stroke-width="1.5"/></svg>
<div class="a t" style="left:1569.70px;top:397.95px;font-size:11.52px;color:#fff;font-weight:400;transform:scaleX(1.0828);">JoeSampson</div>
<div class="a" style="left:1724px;top:394px;width:49.40000000000009px;height:19px;background:rgba(26,26,26,0.72);border-radius:4px;"></div>
<svg class="a" style="left:1726px;top:397px;" width="14" height="14" viewBox="0 0 14 14"><path d="M5 2.5 Q5 0.8 7 0.8 Q9 0.8 9 2.5 L9 7 Q9 8.8 7 8.8 Q5 8.8 5 7Z" fill="#e8484a"/><path d="M3 6.5 Q3 10.5 7 10.5 Q11 10.5 11 6.5 M7 10.5 L7 13 M4.5 13 L9.5 13" stroke="#e8484a" stroke-width="1.2" fill="none"/><path d="M1 13.5 L13 0.5" stroke="#e8484a" stroke-width="1.5"/></svg>
<div class="a t" style="left:1745.00px;top:397.95px;font-size:11.52px;color:#fff;font-weight:400;transform:scaleX(1.0761);">iPad</div>
<div class="a" style="left:1548.7px;top:493px;width:171.29999999999995px;height:19px;background:rgba(26,26,26,0.72);border-radius:4px;"></div>
<svg class="a" style="left:1550.7px;top:496px;" width="14" height="14" viewBox="0 0 14 14"><path d="M5 2.5 Q5 0.8 7 0.8 Q9 0.8 9 2.5 L9 7 Q9 8.8 7 8.8 Q5 8.8 5 7Z" fill="#e8484a"/><path d="M3 6.5 Q3 10.5 7 10.5 Q11 10.5 11 6.5 M7 10.5 L7 13 M4.5 13 L9.5 13" stroke="#e8484a" stroke-width="1.2" fill="none"/><path d="M1 13.5 L13 0.5" stroke="#e8484a" stroke-width="1.5"/></svg>
<div class="a t" style="left:1569.70px;top:496.95px;font-size:11.52px;color:#fff;font-weight:400;transform:scaleX(1.0793);">Ivonne Fernández y Hect...</div>
<div class="a" style="left:1724px;top:493px;width:112px;height:19px;background:rgba(26,26,26,0.72);border-radius:4px;"></div>
<svg class="a" style="left:1726px;top:496px;" width="14" height="14" viewBox="0 0 14 14"><path d="M5 2.5 Q5 0.8 7 0.8 Q9 0.8 9 2.5 L9 7 Q9 8.8 7 8.8 Q5 8.8 5 7Z" fill="#e8484a"/><path d="M3 6.5 Q3 10.5 7 10.5 Q11 10.5 11 6.5 M7 10.5 L7 13 M4.5 13 L9.5 13" stroke="#e8484a" stroke-width="1.2" fill="none"/><path d="M1 13.5 L13 0.5" stroke="#e8484a" stroke-width="1.5"/></svg>
<div class="a t" style="left:1745.00px;top:496.95px;font-size:11.52px;color:#fff;font-weight:400;transform:scaleX(1.1701);">Maria de Los A</div>
<div class="a" style="left:1548.7px;top:592px;width:118.29999999999995px;height:19px;background:rgba(26,26,26,0.72);border-radius:4px;"></div>
<svg class="a" style="left:1550.7px;top:595px;" width="14" height="14" viewBox="0 0 14 14"><path d="M5 2.5 Q5 0.8 7 0.8 Q9 0.8 9 2.5 L9 7 Q9 8.8 7 8.8 Q5 8.8 5 7Z" fill="#e8484a"/><path d="M3 6.5 Q3 10.5 7 10.5 Q11 10.5 11 6.5 M7 10.5 L7 13 M4.5 13 L9.5 13" stroke="#e8484a" stroke-width="1.2" fill="none"/><path d="M1 13.5 L13 0.5" stroke="#e8484a" stroke-width="1.5"/></svg>
<div class="a t" style="left:1569.70px;top:595.95px;font-size:11.52px;color:#fff;font-weight:400;transform:scaleX(1.0949);">Antonia Jimenez</div>
<div class="a" style="left:1724px;top:592px;width:158px;height:19px;background:#2a2a2a;border-radius:4px;"></div>
<div class="a t" style="left:1727.50px;top:595.95px;font-size:11.52px;color:#fff;font-weight:400;transform:scaleX(1.1382);">Enid's Notetaker (Otter.ai)</div>
<div class="a" style="left:1548.7px;top:691px;width:171.29999999999995px;height:19px;background:#2a2a2a;border-radius:4px;"></div>
<div class="a t" style="left:1551.40px;top:695.05px;font-size:11.52px;color:#fff;font-weight:400;transform:scaleX(1.1493);">Robert's Notetaker (Otter.ai)</div>
<div class="a" style="left:1724px;top:691px;width:110px;height:19px;background:#2a2a2a;border-radius:4px;"></div>
<svg class="a" style="left:1726px;top:694px;" width="14" height="14" viewBox="0 0 14 14"><path d="M5 2.5 Q5 0.8 7 0.8 Q9 0.8 9 2.5 L9 7 Q9 8.8 7 8.8 Q5 8.8 5 7Z" fill="#e8484a"/><path d="M3 6.5 Q3 10.5 7 10.5 Q11 10.5 11 6.5 M7 10.5 L7 13 M4.5 13 L9.5 13" stroke="#e8484a" stroke-width="1.2" fill="none"/><path d="M1 13.5 L13 0.5" stroke="#e8484a" stroke-width="1.5"/></svg>
<div class="a t" style="left:1745.50px;top:695.05px;font-size:11.52px;color:#fff;font-weight:400;transform:scaleX(1.1110);">Jorge's iPhone</div>
<div class="a" style="left:1548.7px;top:790px;width:139.29999999999995px;height:18.399999999999977px;background:#2a2a2a;border-radius:4px;"></div>
<div class="a t" style="left:1551.70px;top:793.95px;font-size:11.52px;color:#fff;font-weight:400;transform:scaleX(1.1255);">Juanita Valentin-Morris</div>
<div class="a" style="left:1724px;top:790px;width:173px;height:18.399999999999977px;background:#2a2a2a;border-radius:4px;"></div>
<svg class="a" style="left:1726px;top:793px;" width="14" height="14" viewBox="0 0 14 14"><path d="M5 2.5 Q5 0.8 7 0.8 Q9 0.8 9 2.5 L9 7 Q9 8.8 7 8.8 Q5 8.8 5 7Z" fill="#e8484a"/><path d="M3 6.5 Q3 10.5 7 10.5 Q11 10.5 11 6.5 M7 10.5 L7 13 M4.5 13 L9.5 13" stroke="#e8484a" stroke-width="1.2" fill="none"/><path d="M1 13.5 L13 0.5" stroke="#e8484a" stroke-width="1.5"/></svg>
<div class="a t" style="left:1745.30px;top:793.95px;font-size:11.52px;color:#fff;font-weight:400;transform:scaleX(1.0671);">CPA Luis Ramírez - PRSoft</div>
<div class="a" style="left:1548.7px;top:888.7px;width:99.29999999999995px;height:18.699999999999932px;background:#2a2a2a;border-radius:4px;"></div>
<div class="a t" style="left:1551.70px;top:892.95px;font-size:11.52px;color:#fff;font-weight:400;transform:scaleX(1.1366);">Juan Woodroffe</div>
<div class="a" style="left:1724px;top:888.7px;width:88px;height:18.699999999999932px;background:rgba(26,26,26,0.72);border-radius:4px;"></div>
<svg class="a" style="left:1726px;top:891.7px;" width="14" height="14" viewBox="0 0 14 14"><path d="M5 2.5 Q5 0.8 7 0.8 Q9 0.8 9 2.5 L9 7 Q9 8.8 7 8.8 Q5 8.8 5 7Z" fill="#e8484a"/><path d="M3 6.5 Q3 10.5 7 10.5 Q11 10.5 11 6.5 M7 10.5 L7 13 M4.5 13 L9.5 13" stroke="#e8484a" stroke-width="1.2" fill="none"/><path d="M1 13.5 L13 0.5" stroke="#e8484a" stroke-width="1.5"/></svg>
<div class="a t" style="left:1745.30px;top:892.95px;font-size:11.52px;color:#fff;font-weight:400;transform:scaleX(1.0699);">John Regis</div>
<div class="a" style="left:1523px;top:528px;width:1.3px;height:26px;background:#bbb;border-radius:1px;"></div>
<div class="a" style="left:1526px;top:528px;width:1.3px;height:26px;background:#bbb;border-radius:1px;"></div>
<div class="a" style="left:14px;top:973px;width:1898px;height:58px;background:#000;border-radius:0 0 9px 9px;"></div>
<svg class="a" style="left:58px;top:983px;" width="16" height="24" viewBox="0 0 16 24"><rect x="4.2" y="0.7" width="7.6" height="14" rx="3.8" stroke="#fff" stroke-width="1.3" fill="none"/><path d="M0.8 10 Q0.8 18.5 8 18.5 Q15.2 18.5 15.2 10 M8 18.5 L8 23 M3.5 23.2 L12.5 23.2" stroke="#fff" stroke-width="1.3" fill="none"/></svg>
<div class="a t" style="left:50.00px;top:1011.81px;font-size:11.80px;color:#e8e8e8;font-weight:400;transform:scaleX(1.0596);">Audio</div>
<svg class="a" style="left:94px;top:992px;" width="8" height="5" viewBox="0 0 8 5"><path d="M0.8 4.2 L4 1 L7.2 4.2" stroke="#fff" stroke-width="1.3" fill="none"/></svg>
<svg class="a" style="left:147px;top:988px;" width="25" height="15" viewBox="0 0 25 15"><rect x="0.7" y="0.7" width="16" height="13.6" rx="3" stroke="#fff" stroke-width="1.3" fill="none"/><path d="M18 5 L23.8 1.2 L23.8 13.8 L18 10Z" stroke="#fff" stroke-width="1.3" fill="none"/></svg>
<div class="a t" style="left:143.00px;top:1011.81px;font-size:11.80px;color:#e8e8e8;font-weight:400;transform:scaleX(1.0346);">Video</div>
<svg class="a" style="left:192px;top:992px;" width="8" height="5" viewBox="0 0 8 5"><path d="M0.8 4.2 L4 1 L7.2 4.2" stroke="#fff" stroke-width="1.3" fill="none"/></svg>
<svg class="a" style="left:703px;top:986px;" width="20" height="18" viewBox="0 0 20 18"><circle cx="5.5" cy="4" r="3" stroke="#fff" stroke-width="1.3" fill="none"/><path d="M0.7 17 L0.7 13 Q0.7 8.8 5.5 8.8 Q7.5 8.8 8.6 9.6" stroke="#fff" stroke-width="1.3" fill="none"/><circle cx="13" cy="7" r="2.8" stroke="#fff" stroke-width="1.3" fill="none"/><rect x="7.2" y="11.5" width="12" height="5.8" rx="2.9" stroke="#fff" stroke-width="1.3" fill="none"/></svg>
<div class="a t" style="left:729.00px;top:986.91px;font-size:11.80px;color:#e8e8e8;font-weight:400;transform:scaleX(0.8935);">16</div>
<svg class="a" style="left:762px;top:993px;" width="8" height="5" viewBox="0 0 8 5"><path d="M0.8 4.2 L4 1 L7.2 4.2" stroke="#fff" stroke-width="1.3" fill="none"/></svg>
<div class="a t" style="left:682.80px;top:1011.81px;font-size:11.80px;color:#e8e8e8;font-weight:400;transform:scaleX(0.9929);">Participants</div>
<svg class="a" style="left:811px;top:984px;" width="20" height="23" viewBox="0 0 20 23"><path d="M6 3 Q6 0.8 9 0.8 L14 0.8" stroke="#fff" stroke-width="1.2" fill="none"/><rect x="0.8" y="5" width="17" height="12" rx="6" stroke="#fff" stroke-width="1.3" fill="none"/><path d="M5 17 L3.5 21.5 L9 17" stroke="#fff" stroke-width="1.3" fill="none"/><circle cx="5.5" cy="11" r="1" fill="#fff"/><circle cx="9.3" cy="11" r="1" fill="#fff"/><circle cx="13.1" cy="11" r="1" fill="#fff"/></svg>
<div class="a" style="left:827px;top:980.3px;width:16.2px;height:16.2px;background:#eb3b3f;border-radius:50%;"></div>
<div class="a t" style="left:832.20px;top:983.59px;font-size:10.29px;color:#fff;font-weight:700;">1</div>
<div class="a t" style="left:811.20px;top:1011.81px;font-size:11.80px;color:#e8e8e8;font-weight:400;transform:scaleX(0.9561);">Chat</div>
<svg class="a" style="left:852px;top:993px;" width="8" height="5" viewBox="0 0 8 5"><path d="M0.8 4.2 L4 1 L7.2 4.2" stroke="#fff" stroke-width="1.3" fill="none"/></svg>
<svg class="a" style="left:896px;top:985px;" width="25" height="21" viewBox="0 0 25 21"><path d="M12.5 19.8 L3 10.5 Q-0.5 6.5 2.5 3 Q6.5 -0.5 11 3 L12.5 4.5 L14 3 Q18.5 -0.5 22.5 3 Q25.5 6.5 22 10.5Z" stroke="#fff" stroke-width="1.3" fill="none"/></svg>
<div class="a t" style="left:893.60px;top:1011.81px;font-size:11.80px;color:#e8e8e8;font-weight:400;transform:scaleX(0.9224);">React</div>
<svg class="a" style="left:932px;top:993px;" width="8" height="5" viewBox="0 0 8 5"><path d="M0.8 4.2 L4 1 L7.2 4.2" stroke="#fff" stroke-width="1.3" fill="none"/></svg>
<div class="a" style="left:985px;top:985px;width:24px;height:20px;background:#1be69c;border-radius:3px;"></div>
<svg class="a" style="left:991px;top:988px;" width="12" height="14" viewBox="0 0 12 14"><path d="M6 13 L6 3 M1.5 7 L6 2 L10.5 7" stroke="#000" stroke-width="2.2" fill="none"/></svg>
<div class="a t" style="left:982.00px;top:1011.81px;font-size:11.80px;color:#e8e8e8;font-weight:400;transform:scaleX(0.9524);">Share</div>
<svg class="a" style="left:1080px;top:983px;" width="24" height="23" viewBox="0 0 24 23"><defs><linearGradient id="aig" x1="0" y1="0" x2="1" y2="1"><stop offset="0" stop-color="#e8f8ff"/><stop offset="1" stop-color="#90c8e0"/></linearGradient></defs><path d="M10 5 Q11 15 20 15 Q11 15 10 23 Q9 15 0 15 Q9 15 10 5Z" fill="url(#aig)"/><path d="M19 0.5 Q19.5 3.8 23 4.2 Q19.5 4.6 19 8 Q18.5 4.6 15 4.2 Q18.5 3.8 19 0.5Z" fill="#c8eaf8"/></svg>
<div class="a t" style="left:1054.40px;top:1011.81px;font-size:11.80px;color:#e8e8e8;font-weight:400;transform:scaleX(1.0223);">AI Companion</div>
<svg class="a" style="left:1168px;top:984px;" width="22" height="22" viewBox="0 0 22 22"><path d="M1 8 L1 4.5 Q1 1 4.5 1 L8 1 M14 21 L17.5 21 Q21 21 21 17.5 L21 14" stroke="#fff" stroke-width="1.4" fill="none"/><circle cx="16" cy="5.5" r="4" stroke="#fff" stroke-width="1.4" fill="none"/><circle cx="5.5" cy="16.5" r="4" stroke="#fff" stroke-width="1.4" fill="none"/></svg>
<div class="a t" style="left:1195.00px;top:987.87px;font-size:9.60px;color:#e8e8e8;font-weight:400;">1</div>
<div class="a t" style="left:1165.40px;top:1011.81px;font-size:11.80px;color:#e8e8e8;font-weight:400;transform:scaleX(0.9852);">Apps</div>
<svg class="a" style="left:1247px;top:983px;" width="24" height="24" viewBox="0 0 24 24"><circle cx="12" cy="12" r="10.8" stroke="#fff" stroke-width="1.5" fill="none"/><circle cx="12" cy="12" r="4.7" fill="#fff"/></svg>
<div class="a t" style="left:1240.00px;top:1011.81px;font-size:11.80px;color:#e8e8e8;font-weight:400;transform:scaleX(0.9646);">Record</div>
<svg class="a" style="left:1328.5px;top:983px;" width="25" height="24" viewBox="0 0 25 24"><circle cx="12.5" cy="12" r="11" stroke="#fff" stroke-width="1.5" fill="none"/><circle cx="7.3" cy="12" r="1.4" fill="#fff"/><circle cx="12.5" cy="12" r="1.4" fill="#fff"/><circle cx="17.7" cy="12" r="1.4" fill="#fff"/></svg>
<div class="a t" style="left:1327.30px;top:1011.81px;font-size:11.80px;color:#e8e8e8;font-weight:400;transform:scaleX(1.0299);">More</div>
<svg class="a" style="left:1852px;top:983px;" width="25" height="24" viewBox="0 0 25 24"><path d="M9.2 0.8 L23.6 0.8 M17 5.5 L23.6 0.8 L23.6 19.5 L17 23 Z" stroke="#ff1a5c" stroke-width="1.5" fill="none" stroke-linejoin="round"/><circle cx="8" cy="5" r="2.8" stroke="#fff" stroke-width="1.3" fill="none"/><path d="M5.5 9 Q2 10 1.2 13.5 L3.5 14 L5.5 11.5 L5.8 16 L2.5 22 L5 22.5 L8 17.5 L10.5 22.5 L12.5 22 L10 16 L10 12 L11.5 14 L13 13 Q11 9.2 8 9Z" stroke="#fff" stroke-width="1.1" fill="none"/></svg>
<div class="a t" style="left:1849.70px;top:1011.81px;font-size:11.80px;color:#e8e8e8;font-weight:400;transform:scaleX(0.9114);">Leave</div>
<div class="a" style="left:20px;top:898.5px;width:1499px;height:37.5px;background:linear-gradient(90deg,#2c1b28 0%,#30202a 20%,#38242a 35%,#3b2528 55%,#3b2124 75%,#3a1c1d 100%);"></div>
<svg class="a" style="left:35px;top:911px;" width="20" height="15" viewBox="0 0 20 15"><path d="M1 8 L8 4.5 L15 2" stroke="#3aa83a" stroke-width="2.5" fill="none"/><path d="M1 13 L6 11 M9 10 L13 8" stroke="#3aa83a" stroke-width="2.2" fill="none"/></svg>
<div class="a" style="left:43px;top:903px;width:13px;height:13px;background:#f4a3b3;border-radius:50%;"></div>
<div class="a t" style="left:46.30px;top:905.75px;font-size:8.92px;color:#222;font-weight:400;transform:scaleX(1.2933);">6</div>
<div class="a t" style="left:59.40px;top:906.85px;font-size:8.92px;color:#eee;font-weight:400;transform:scaleX(0.9954);">NASDAQ</div>
<div class="a t" style="left:70.90px;top:919.25px;font-size:8.92px;color:#5cbf5c;font-weight:400;transform:scaleX(1.0094);">80%</div>
<svg class="a" style="left:501px;top:909px;" width="19" height="18" viewBox="0 0 19 18"><rect x="0" y="0" width="9" height="8.5" fill="#3ab4f0"/><rect x="10" y="0" width="9" height="8.5" fill="#3ab4f0"/><rect x="0" y="9.5" width="9" height="8.5" fill="#3ab4f0"/><rect x="10" y="9.5" width="9" height="8.5" fill="#3ab4f0"/></svg>
<div class="a" style="left:530px;top:905.4px;width:171px;height:24.6px;background:#4a3a38;border-radius:12.3px;"></div>
<svg class="a" style="left:539px;top:911px;" width="13" height="13" viewBox="0 0 13 13"><circle cx="5.5" cy="5.5" r="4.6" stroke="#eee" stroke-width="1.3" fill="none"/><path d="M9 9 L12.5 12.5" stroke="#eee" stroke-width="1.5"/></svg>
<div class="a t" style="left:558.70px;top:913.87px;font-size:9.60px;color:#ddd;font-weight:400;transform:scaleX(1.0513);">Search</div>
<svg class="a" style="left:660px;top:909px;" width="38" height="18" viewBox="0 0 38 18"><ellipse cx="19" cy="11" rx="18" ry="6" fill="#6aa870"/><rect x="6" y="2" width="26" height="9" fill="#70a8d0"/><polygon points="14,18 19,8 24,18" fill="#d03040"/></svg>
<svg class="a" style="left:711px;top:909px;" width="20" height="18" viewBox="0 0 20 18"><rect x="0" y="6" width="12" height="11" fill="#9a9a9a"/><rect x="6" y="0" width="13" height="12" fill="#e8e8e8"/></svg>
<svg class="a" style="left:745px;top:906px;" width="21" height="21" viewBox="0 0 21 21"><circle cx="10.5" cy="10.5" r="10.5" fill="#db4437"/><path d="M10.5 10.5 L1.407 15.75 A10.5 10.5 0 0 0 13.02 20.79Z" fill="#0f9d58"/><path d="M10.5 10.5 L13.02 20.79 A10.5 10.5 0 0 0 21 10.29 L19.53 5.25Z" fill="#f4b400"/><path d="M10.5 10.5 L19.53 5.25 L1.407 5.25 L1.407 15.75Z" fill="#db4437"/><circle cx="10.5" cy="10.5" r="4.83" fill="#fff"/><circle cx="10.5" cy="10.5" r="3.78" fill="#4285f4"/></svg>
<div class="a" style="left:752px;top:931px;width:6px;height:2px;background:#aaa;border-radius:1px;"></div>
<svg class="a" style="left:779px;top:907px;" width="20" height="20" viewBox="0 0 20 20"><path d="M0 2 L7 2 L9 4 L20 4 L20 18 L0 18Z" fill="#f5c030"/><rect x="5" y="11" width="10" height="5" fill="#2a80d8"/></svg>
<svg class="a" style="left:812px;top:907px;" width="20" height="20" viewBox="0 0 20 20"><rect x="3" y="1" width="16" height="13" fill="#ccc"/><rect x="1" y="4" width="17" height="14" fill="#e0e0e0"/><circle cx="9.5" cy="13" r="4" fill="#e04030"/><circle cx="9.5" cy="13" r="1.8" fill="#3070e0"/></svg>
<svg class="a" style="left:848px;top:907px;" width="20" height="20" viewBox="0 0 20 20"><path d="M3 2 L19 2 L17 18 L1 18Z" fill="#e8f0ff"/><path d="M14 5 L8 5 Q5 5 6 8 L11 10 Q13 11 12 13 L5 13" stroke="#2060c0" stroke-width="2.5" fill="none"/></svg>
<svg class="a" style="left:882px;top:907px;" width="20" height="20" viewBox="0 0 20 20"><circle cx="10" cy="10" r="9.5" fill="#1b2838"/><circle cx="13" cy="7.5" r="3.5" stroke="#fff" stroke-width="1.5" fill="none"/><path d="M1 11 L8 14 L12 9" stroke="#fff" stroke-width="2" fill="none"/></svg>
<svg class="a" style="left:917px;top:907px;" width="20" height="20" viewBox="0 0 20 20"><defs><linearGradient id="eg917" x1="0" y1="1" x2="1" y2="0"><stop offset="0" stop-color="#0c59a4"/><stop offset="0.5" stop-color="#1e90e0"/><stop offset="1" stop-color="#50d060"/></linearGradient></defs><circle cx="10.0" cy="10.0" r="10.0" fill="url(#eg917)"/><ellipse cx="11.6" cy="11.6" rx="4.4" ry="3.2" fill="#1e6fc0"/></svg>
<svg class="a" style="left:951px;top:907px;" width="21" height="20" viewBox="0 0 21 20"><rect x="5" y="1" width="16" height="18" rx="2" fill="#185abd"/><rect x="5" y="7" width="16" height="6" fill="#2b7cd3"/><rect x="0" y="4" width="11" height="11" rx="1.5" fill="#103f91"/><text x="1.3" y="13" font-size="9" font-weight="700" fill="#fff" font-family="Liberation Sans">W</text></svg>
<div class="a" style="left:958px;top:931px;width:6px;height:2px;background:#aaa;border-radius:1px;"></div>
<svg class="a" style="left:985px;top:907px;" width="20" height="20" viewBox="0 0 20 20"><circle cx="10" cy="10" r="10" fill="#2d7ff5"/><text x="3" y="13.5" font-size="9" font-weight="700" fill="#fff" font-family="Liberation Sans">zm</text></svg>
<div class="a" style="left:992px;top:931px;width:6px;height:2px;background:#aaa;border-radius:1px;"></div>
<div class="a" style="left:1015px;top:903.5px;width:30px;height:30px;background:rgba(255,255,255,0.08);border-radius:4px;"></div>
<svg class="a" style="left:1020px;top:908px;" width="20" height="20" viewBox="0 0 20 20"><circle cx="11" cy="10" r="9" fill="#e86a46"/><path d="M11 1 A9 9 0 0 1 20 10 L11 10Z" fill="#f08a60"/><rect x="0" y="4" width="11" height="11" rx="1.5" fill="#c43e1c"/><text x="2.3" y="13" font-size="9" font-weight="700" fill="#fff" font-family="Liberation Sans">P</text></svg>
<div class="a" style="left:1023px;top:931px;width:14px;height:2.5px;background:#e89ce8;border-radius:1px;"></div>
<svg class="a" style="left:1290px;top:916px;" width="10" height="6" viewBox="0 0 10 6"><path d="M0.8 5 L5 0.8 L9.2 5" stroke="#eee" stroke-width="1.3" fill="none"/></svg>
<svg class="a" style="left:1313px;top:913px;" width="14" height="9" viewBox="0 0 14 9"><path d="M3 8.5 Q0 8.5 0.5 5.5 Q1 3.5 3.5 3.5 Q4.5 0.5 8 0.5 Q11.5 0.5 12 4 Q14 4.5 13.5 7 Q13 8.5 11 8.5Z" fill="#e8e8e8"/></svg>
<svg class="a" style="left:1340px;top:911px;" width="10" height="13" viewBox="0 0 10 13"><rect x="2.5" y="0.5" width="5" height="8" rx="2.5" stroke="#b87fd8" stroke-width="1.2" fill="none"/><path d="M0.7 6 Q0.7 10.2 5 10.2 Q9.3 10.2 9.3 6 M5 10.2 L5 12.5" stroke="#b87fd8" stroke-width="1.2" fill="none"/></svg>
<div class="a t" style="left:1365.50px;top:914.08px;font-size:7.82px;color:#eee;font-weight:400;transform:scaleX(1.0633);">ENG</div>
<svg class="a" style="left:1397px;top:911px;" width="14" height="13" viewBox="0 0 14 13"><rect x="0.6" y="0.6" width="9" height="8" stroke="#eee" stroke-width="1.1" fill="none"/><path d="M3 12.4 L8 12.4 M5.5 8.6 L5.5 12.4" stroke="#eee" stroke-width="1"/><rect x="10.5" y="0" width="3" height="4" rx="1" stroke="#eee" stroke-width="0.9" fill="none"/><path d="M12 4 L12 12.4" stroke="#eee" stroke-width="1"/></svg>
<svg class="a" style="left:1417px;top:912px;" width="12" height="11" viewBox="0 0 12 11"><path d="M0.6 3.5 L3 3.5 L6 0.6 L6 10.4 L3 7.5 L0.6 7.5Z" stroke="#eee" stroke-width="1" fill="none"/><path d="M8 3 Q9.3 5.5 8 8 M10 1.5 Q12 5.5 10 9.5" stroke="#eee" stroke-width="1" fill="none"/></svg>
<div class="a t" style="left:1446.70px;top:907.03px;font-size:8.23px;color:#eee;font-weight:400;transform:scaleX(1.0958);">12:58 PM</div>
<div class="a t" style="left:1442.00px;top:919.53px;font-size:8.23px;color:#eee;font-weight:400;transform:scaleX(1.1822);">5/13/2025</div>
<svg class="a" style="left:1492px;top:911px;" width="11" height="13" viewBox="0 0 11 13"><path d="M5.5 0.8 Q9.5 0.8 9.5 5 L9.5 9 L10.5 10.5 L0.5 10.5 L1.5 9 L1.5 5 Q1.5 0.8 5.5 0.8Z" fill="#eee"/><circle cx="5.5" cy="12" r="1.2" fill="#eee"/><path d="M4 4 L8 4 M4 6 L8 6 M4 8 L7 8" stroke="#3a1b1c" stroke-width="0.9"/></svg>
<div class="a" style="left:40.4px;top:917.3px;width:32px;height:32px;background:#2a2b2e;border-radius:50%;"></div>
<svg class="a" style="left:48px;top:924px;" width="16" height="18" viewBox="0 0 16 18"><path d="M2 14 L2 10.5 L11 1.5 L14.5 5 L5.5 14Z M9.5 3 L13 6.5" stroke="#1fe08a" stroke-width="1.3" fill="none"/><path d="M1 16.8 L14.5 16.8" stroke="#1fe08a" stroke-width="1.3"/></svg>
<div class="a" style="left:0px;top:1031px;width:1920px;height:49px;background:linear-gradient(90deg,#e1dfdd 0%,#e4e0df 25%,#e9e1e3 45%,#ebe2e2 65%,#eee2dd 85%,#efe3dc 100%);"></div>
<div class="a" style="left:0px;top:1031px;width:1920px;height:1px;background:#cfcccc;"></div>
<svg class="a" style="left:21px;top:1045px;" width="22" height="21" viewBox="0 0 22 21"><rect x="0" y="0" width="21" height="21" fill="#2a9a2a"/><rect x="17" y="0" width="4" height="21" fill="#1a7a1a"/><circle cx="8" cy="8" r="4" fill="#e8f0e0"/><rect x="3" y="16" width="13" height="2" fill="#e8e048"/></svg>
<div class="a" style="left:31px;top:1039px;width:16px;height:16px;background:#d42a2a;border-radius:50%;"></div>
<div class="a t" style="left:35.50px;top:1043.37px;font-size:9.60px;color:#fff;font-weight:400;transform:scaleX(1.1259);">6</div>
<svg class="a" style="left:341px;top:1044.5px;" width="23" height="23" viewBox="0 0 23 23"><defs><linearGradient id="wl" x1="0" y1="0" x2="1" y2="1"><stop offset="0" stop-color="#30c8f8"/><stop offset="1" stop-color="#0a78d8"/></linearGradient></defs><rect x="0" y="0" width="11" height="11" rx="1" fill="url(#wl)"/><rect x="12" y="0" width="11" height="11" rx="1" fill="url(#wl)"/><rect x="0" y="12" width="11" height="11" rx="1" fill="url(#wl)"/><rect x="12" y="12" width="11" height="11" rx="1" fill="url(#wl)"/></svg>
<svg class="a" style="left:386px;top:1044.5px;" width="22" height="23" viewBox="0 0 22 23"><circle cx="9" cy="9" r="7.5" stroke="#1a1a1a" stroke-width="2.2" fill="none"/><path d="M14.5 14.5 L21 21.5" stroke="#1a1a1a" stroke-width="2.4"/></svg>
<svg class="a" style="left:429px;top:1044.5px;" width="24" height="23" viewBox="0 0 24 23"><rect x="0" y="7" width="17" height="16" rx="1" fill="#2a2a2a"/><rect x="7" y="0" width="17" height="16" rx="1" fill="#f4f4f4"/><rect x="7" y="7" width="10" height="9" fill="#bdbdbd"/></svg>
<svg class="a" style="left:473px;top:1044.5px;" width="24" height="23" viewBox="0 0 24 23"><defs><linearGradient id="cp1" x1="0" y1="0" x2="1" y2="1"><stop offset="0" stop-color="#2ab0f0"/><stop offset="0.35" stop-color="#58d080"/><stop offset="0.7" stop-color="#f0a030"/><stop offset="1" stop-color="#f04080"/></linearGradient><linearGradient id="cp2" x1="1" y1="0" x2="0" y2="1"><stop offset="0" stop-color="#3070f0"/><stop offset="0.5" stop-color="#c060f0"/><stop offset="1" stop-color="#f06040"/></linearGradient></defs><path d="M9 1 L16 1 Q19 1 18 5 L13 19 Q12 22 9 22 L4 22 Q1 22 2 18 L7 4 Q8 1 11 1Z" fill="url(#cp1)"/><path d="M13 5 L20 5 Q24 5 23 9 L19 19 Q18 22 15 22 L8 22" fill="url(#cp2)" opacity="0.9"/></svg>
<svg class="a" style="left:520px;top:1044.5px;" width="18" height="23" viewBox="0 0 18 23"><rect x="0" y="0" width="18" height="23" rx="2" fill="#6a7a8a"/><rect x="2.5" y="2" width="13" height="4" fill="#50c8f0"/><rect x="2.5" y="8.0" width="3.5" height="3.5" fill="#e8f0f4"/><rect x="7.0" y="8.0" width="3.5" height="3.5" fill="#e8f0f4"/><rect x="11.5" y="8.0" width="3.5" height="3.5" fill="#e8f0f4"/><rect x="2.5" y="12.8" width="3.5" height="3.5" fill="#e8f0f4"/><rect x="7.0" y="12.8" width="3.5" height="3.5" fill="#e8f0f4"/><rect x="2.5" y="17.6" width="3.5" height="3.5" fill="#e8f0f4"/><rect x="7.0" y="17.6" width="3.5" height="3.5" fill="#e8f0f4"/><rect x="11.5" y="12.8" width="3.5" height="8.3" fill="#1a4a8a"/></svg>
<svg class="a" style="left:561px;top:1044.5px;" width="24" height="24" viewBox="0 0 24 24"><defs><linearGradient id="eg561" x1="0" y1="1" x2="1" y2="0"><stop offset="0" stop-color="#0c59a4"/><stop offset="0.5" stop-color="#1e90e0"/><stop offset="1" stop-color="#50d060"/></linearGradient></defs><circle cx="12.0" cy="12.0" r="12.0" fill="url(#eg561)"/><ellipse cx="13.919999999999998" cy="13.919999999999998" rx="5.28" ry="3.84" fill="#1e6fc0"/></svg>
<div class="a" style="left:570px;top:1072px;width:6.5px;height:2.5px;background:#888;border-radius:1px;"></div>
<svg class="a" style="left:605px;top:1044.5px;" width="24" height="24" viewBox="0 0 24 24"><circle cx="12.0" cy="12.0" r="12.0" fill="#db4437"/><path d="M12.0 12.0 L1.608 18.0 A12.0 12.0 0 0 0 14.879999999999999 23.759999999999998Z" fill="#0f9d58"/><path d="M12.0 12.0 L14.879999999999999 23.759999999999998 A12.0 12.0 0 0 0 24 11.76 L22.32 6.0Z" fill="#f4b400"/><path d="M12.0 12.0 L22.32 6.0 L1.608 6.0 L1.608 18.0Z" fill="#db4437"/><circle cx="12.0" cy="12.0" r="5.5200000000000005" fill="#fff"/><circle cx="12.0" cy="12.0" r="4.32" fill="#4285f4"/></svg>
<svg class="a" style="left:650px;top:1044.5px;" width="22" height="23" viewBox="0 0 22 23"><ellipse cx="11" cy="11.5" rx="11" ry="11.5" fill="#e01a2a"/><ellipse cx="11" cy="11.5" rx="4.8" ry="8.5" fill="#eee1e0"/></svg>
<svg class="a" style="left:696px;top:1044.5px;" width="19" height="23" viewBox="0 0 19 23"><defs><linearGradient id="arc" x1="0" y1="0" x2="1" y2="1"><stop offset="0" stop-color="#f07050"/><stop offset="0.5" stop-color="#d050e0"/><stop offset="1" stop-color="#5040f0"/></linearGradient></defs><path d="M1 1 L10 1 Q19 3 18 12 Q17 22 6 22 L1 22 L6 12Z" fill="url(#arc)"/></svg>
<svg class="a" style="left:737px;top:1044.5px;" width="24" height="23" viewBox="0 0 24 23"><defs><linearGradient id="zmg" x1="0" y1="0" x2="0" y2="1"><stop offset="0" stop-color="#4a8cff"/><stop offset="1" stop-color="#0b5cff"/></linearGradient></defs><rect x="0" y="0" width="24" height="23" rx="10" fill="url(#zmg)"/><text x="3.5" y="15.5" font-size="10.5" font-weight="700" fill="#fff" font-family="Liberation Sans">zm</text></svg>
<div class="a" style="left:745px;top:1072px;width:7px;height:2.5px;background:#888;border-radius:1px;"></div>
<svg class="a" style="left:781px;top:1044.5px;" width="24" height="23" viewBox="0 0 24 23"><path d="M12 0.5 Q23 0.5 23 11 L23 22.5 L17 22.5 L17 20 Q14 23 10 23 Q1 23 1 12 Q1 0.5 12 0.5Z M12 6.5 Q7 6.5 7 12 Q7 17 12 17 Q17 17 17 12 Q17 6.5 12 6.5Z" fill="#5a1050" fill-rule="evenodd"/></svg>
<svg class="a" style="left:825px;top:1044.5px;" width="24" height="23" viewBox="0 0 24 23"><circle cx="19" cy="5" r="3.5" fill="#7b83eb"/><rect x="13" y="9" width="11" height="12" rx="4" fill="#7b83eb"/><circle cx="12" cy="4" r="4" fill="#5059c9"/><rect x="6" y="8.5" width="13" height="14" rx="3" fill="#5b63d3"/><rect x="0" y="6" width="12" height="12" rx="1.5" fill="#4b53bc"/><text x="2.7" y="15.5" font-size="9" font-weight="700" fill="#fff" font-family="Liberation Sans">T</text></svg>
<svg class="a" style="left:869px;top:1044.5px;" width="25" height="24" viewBox="0 0 25 24"><path d="M12 1.5 Q22 1.5 22 12 Q22 22 12 22 Q9 22 6.5 20.8 L1.5 22.5 L3.3 17.8 Q2 15 2 12 Q2 1.5 12 1.5Z" stroke="#25a244" stroke-width="2.3" fill="none"/><path d="M8 7 Q7 10 10 14 Q13 17.5 16 17 L16.5 14.5 L14 13.5 L13 14.5 Q11 13.5 9.5 11 L10.5 10 L9.5 7Z" fill="#25a244"/></svg>
<div class="a" style="left:882px;top:1039.3px;width:16px;height:15px;background:#1f8a96;border-radius:50%;"></div>
<div class="a t" style="left:887.30px;top:1042.52px;font-size:10.01px;color:#fff;font-weight:400;transform:scaleX(0.8997);">1</div>
<svg class="a" style="left:912.5px;top:1044.5px;" width="24.5" height="24" viewBox="0 0 24.5 24"><circle cx="12.25" cy="12" r="12" fill="#1877f2"/><path d="M14 24 L14 15 L17 15 L17.5 11.5 L14 11.5 L14 9.5 Q14 8 15.5 8 L17.5 8 L17.5 5 Q16 4.8 14.8 4.8 Q10.3 4.8 10.3 9.3 L10.3 11.5 L7.3 11.5 L7.3 15 L10.3 15 L10.3 24Z" fill="#fff"/></svg>
<svg class="a" style="left:958px;top:1044.5px;" width="22" height="22" viewBox="0 0 22 22"><path d="M2 6 L14 0.5 L21 10 L9 21Z" fill="#fff" stroke="#222" stroke-width="1.2"/><path d="M2 6 L11 11 L14 0.5" stroke="#444" stroke-width="0.8" fill="none"/><rect x="14.5" y="5" width="3" height="3" fill="#e02020"/></svg>
<svg class="a" style="left:1001px;top:1045px;" width="24" height="22" viewBox="0 0 24 22"><rect x="6" y="0" width="18" height="22" rx="1.5" fill="#41a5ee"/><rect x="6" y="7" width="18" height="8" fill="#2b7cd3"/><rect x="6" y="15" width="18" height="7" fill="#185abd"/><rect x="0" y="5" width="12.5" height="12.5" rx="1.5" fill="#185abd"/><text x="0.5" y="15" font-size="10.5" font-weight="700" fill="#fff" font-family="Liberation Sans">W</text></svg>
<svg class="a" style="left:1045px;top:1044.5px;" width="24" height="23" viewBox="0 0 24 23"><circle cx="13" cy="11.5" r="11" fill="#ed6c47"/><path d="M13 0.5 A11 11 0 0 1 24 11.5 L13 11.5Z" fill="#ff8f6b"/><path d="M13 11.5 L24 11.5 A11 11 0 0 1 13 22.5Z" fill="#d35230"/><rect x="0" y="5.5" width="12.5" height="12.5" rx="1.5" fill="#c43e1c"/><text x="2.3" y="15.5" font-size="10.5" font-weight="700" fill="#fff" font-family="Liberation Sans">P</text></svg>
<svg class="a" style="left:1088.5px;top:1045px;" width="24" height="22" viewBox="0 0 24 22"><rect x="6" y="0" width="18" height="22" rx="1.5" fill="#33c481"/><rect x="6" y="7" width="18" height="8" fill="#21a366"/><rect x="6" y="15" width="18" height="7" fill="#107c41"/><rect x="0" y="5" width="12.5" height="12.5" rx="1.5" fill="#107c41"/><text x="1.6" y="15" font-size="10.5" font-weight="700" fill="#fff" font-family="Liberation Sans">X</text></svg>
<svg class="a" style="left:1133px;top:1045px;" width="24" height="22" viewBox="0 0 24 22"><rect x="6" y="0" width="18" height="22" rx="1.5" fill="#37c6d0"/><rect x="6" y="7" width="18" height="8" fill="#1a9ba1"/><rect x="6" y="15" width="18" height="7" fill="#077568"/><rect x="0" y="5" width="12.5" height="12.5" rx="1.5" fill="#077568"/><text x="1.6" y="15" font-size="10.5" font-weight="700" fill="#fff" font-family="Liberation Sans">P</text></svg>
<svg class="a" style="left:1176.7px;top:1045px;" width="24" height="22" viewBox="0 0 24 22"><rect x="6" y="0" width="18" height="22" rx="1.5" fill="#ca64ea"/><rect x="6" y="7" width="18" height="8" fill="#ae4bd5"/><rect x="6" y="15" width="18" height="7" fill="#7719aa"/><rect x="0" y="5" width="12.5" height="12.5" rx="1.5" fill="#7719aa"/><text x="1.6" y="15" font-size="10.5" font-weight="700" fill="#fff" font-family="Liberation Sans">N</text></svg>
<svg class="a" style="left:1221px;top:1044.5px;" width="24" height="23" viewBox="0 0 24 23"><rect x="8" y="0" width="16" height="12" fill="#0364b8"/><rect x="16" y="0" width="8" height="6" fill="#28a8ea"/><path d="M8 10 L24 10 L24 23 L8 23Z" fill="#0a78d4"/><path d="M8 12 L16 17 L24 12 L24 23 L8 23Z" fill="#14447d" opacity="0.5"/><rect x="0" y="5" width="13" height="13" rx="1.5" fill="#0f6cbd"/><text x="1.8" y="15.5" font-size="10.5" font-weight="700" fill="#fff" font-family="Liberation Sans">O</text></svg>
<svg class="a" style="left:1265px;top:1039px;" width="30" height="29" viewBox="0 0 30 29"><path d="M8 12 L24 6 L24 27 L8 27Z" fill="#28a8ea"/><rect x="0" y="10" width="13" height="13" rx="1.5" fill="#0f6cbd"/><text x="1.8" y="20.5" font-size="10.5" font-weight="700" fill="#fff" font-family="Liberation Sans">O</text><circle cx="21.5" cy="7.5" r="7.5" fill="#50c8f0"/><rect x="16.5" y="4.5" width="10" height="6.5" stroke="#111" stroke-width="1.1" fill="none"/><path d="M16.5 4.5 L21.5 8.5 L26.5 4.5" stroke="#111" stroke-width="1" fill="none"/></svg>
<div class="a" style="left:1273px;top:1072px;width:7px;height:2.5px;background:#888;border-radius:1px;"></div>
<svg class="a" style="left:1309px;top:1044.5px;" width="24" height="23" viewBox="0 0 24 23"><rect x="0" y="0" width="24" height="23" rx="3" fill="#e81a30"/><circle cx="12" cy="11" r="6.5" stroke="#fff" stroke-width="2.6" fill="none"/><path d="M15 14 L19 18" stroke="#fff" stroke-width="2.8"/></svg>
<svg class="a" style="left:1356.5px;top:1044.5px;" width="17.5" height="23" viewBox="0 0 17.5 23"><path d="M0.6 0.6 L12 0.6 L17 5.5 L17 22.4 L0.6 22.4Z" fill="#fafafa" stroke="#9a9a9a" stroke-width="0.9"/><path d="M12 0.6 L12 5.5 L17 5.5" stroke="#9a9a9a" stroke-width="0.9" fill="none"/></svg>
<svg class="a" style="left:1396.7px;top:1045px;" width="24.5" height="22" viewBox="0 0 24.5 22"><path d="M0 1.5 Q0 0 1.5 0 L8 0 L10 2.5 L23 2.5 Q24.5 2.5 24.5 4 L24.5 22 L0 22Z" fill="#e8a810"/><rect x="0" y="4" width="24.5" height="18" rx="1" fill="#fcd24a"/><rect x="5" y="14" width="14.5" height="6" rx="1" fill="#1a78d4"/></svg>
<svg class="a" style="left:1441px;top:1045px;" width="24" height="22" viewBox="0 0 24 22"><rect x="1.5" y="0" width="21" height="15" rx="1" fill="#1a7ad8"/><rect x="1.5" y="0" width="21" height="5" fill="#40b0f0"/><rect x="9" y="15" width="6" height="5" fill="#1a6ac0"/><rect x="0" y="15" width="24" height="1.5" fill="#1a6ac0"/><rect x="6" y="20" width="12" height="2" fill="#0a5ab0"/></svg>
<svg class="a" style="left:1484.6px;top:1044.5px;" width="24.5" height="23" viewBox="0 0 24.5 23"><path d="M0 8 L12.25 0 L24.5 8 L24.5 23 L0 23Z" fill="#1a60d8"/><path d="M0 8 L12.25 16 L24.5 8" stroke="#0a40a0" stroke-width="1" fill="none"/><circle cx="12.25" cy="10" r="5" fill="#fff"/><text x="9.2" y="13.5" font-size="8" font-weight="700" fill="#1a60d8" font-family="Liberation Sans">b</text></svg>
<svg class="a" style="left:1587px;top:1052px;" width="12" height="8" viewBox="0 0 12 8"><path d="M0.8 7 L6 1.2 L11.2 7" stroke="#1a1a1a" stroke-width="1.4" fill="none"/></svg>
<svg class="a" style="left:1619px;top:1047.5px;" width="12" height="17" viewBox="0 0 12 17"><ellipse cx="6" cy="8.5" rx="6" ry="8.5" fill="#0a7ff0"/><path d="M3 5 L9 11 L6 14 L6 3 L9 6 L3 12" stroke="#fff" stroke-width="1.1" fill="none"/></svg>
<svg class="a" style="left:1648.7px;top:1050px;" width="16" height="11" viewBox="0 0 16 11"><path d="M3.5 10.5 Q0.3 10.5 0.5 7.5 Q0.8 5 3.5 5 Q4.5 0.8 8.5 0.8 Q12.5 1 13 5 Q15.7 5.5 15.5 8 Q15.2 10.5 12.5 10.5Z" fill="#9a9a9a" stroke="#2a2a2a" stroke-width="1"/></svg>
<svg class="a" style="left:1681.6px;top:1047.5px;" width="17" height="17" viewBox="0 0 17 17"><path d="M7 0.5 L13.5 2.8 L13.5 8 Q13.5 13 7 16 Q0.5 13 0.5 8 L0.5 2.8Z" fill="#2a9ae8"/><circle cx="12" cy="12.5" r="4.5" fill="#108a30"/><path d="M9.8 12.5 L11.5 14.2 L14.3 11" stroke="#fff" stroke-width="1.2" fill="none"/></svg>
<svg class="a" style="left:1715px;top:1048px;" width="12" height="17" viewBox="0 0 12 17"><rect x="3.3" y="0.7" width="5.4" height="10" rx="2.7" stroke="#2a7090" stroke-width="1.3" fill="none"/><path d="M0.8 7.5 Q0.8 13.3 6 13.3 Q11.2 13.3 11.2 7.5 M6 13.3 L6 16.5" stroke="#2a7090" stroke-width="1.3" fill="none"/></svg>
<div class="a t" style="left:1748.30px;top:1043.94px;font-size:10.70px;color:#1a1a1a;font-weight:400;transform:scaleX(0.9756);">ENG</div>
<div class="a t" style="left:1747.70px;top:1059.74px;font-size:10.70px;color:#1a1a1a;font-weight:400;transform:scaleX(1.0231);">INTL</div>
<svg class="a" style="left:1788.7px;top:1048px;" width="17" height="16" viewBox="0 0 17 16"><rect x="0.7" y="0.7" width="11" height="10" stroke="#222" stroke-width="1.2" fill="none"/><path d="M3 15.3 L10 15.3 M6.2 10.7 L6.2 15.3" stroke="#222" stroke-width="1.2"/><rect x="13" y="0.5" width="3.5" height="5" rx="1.2" stroke="#222" stroke-width="1" fill="none"/><path d="M14.75 5.5 L14.75 15.3" stroke="#222" stroke-width="1.2"/></svg>
<svg class="a" style="left:1812.4px;top:1049px;" width="17" height="14" viewBox="0 0 17 14"><path d="M0.7 4.5 L3.8 4.5 L7.5 0.8 L7.5 13.2 L3.8 9.5 L0.7 9.5Z" stroke="#222" stroke-width="1.2" fill="none"/><path d="M10 4 Q11.5 7 10 10 M12.5 2.5 Q14.8 7 12.5 11.5" stroke="#222" stroke-width="1.2" fill="none"/><path d="M15 1 Q17.8 7 15 13" stroke="#aaa" stroke-width="1" fill="none"/></svg>
<div class="a t" style="left:1851.60px;top:1042.76px;font-size:10.56px;color:#1a1a1a;font-weight:400;transform:scaleX(1.0773);">12:58 PM</div>
<div class="a t" style="left:1846.20px;top:1058.56px;font-size:10.56px;color:#1a1a1a;font-weight:400;transform:scaleX(1.1510);">5/13/2025</div></body></html>
